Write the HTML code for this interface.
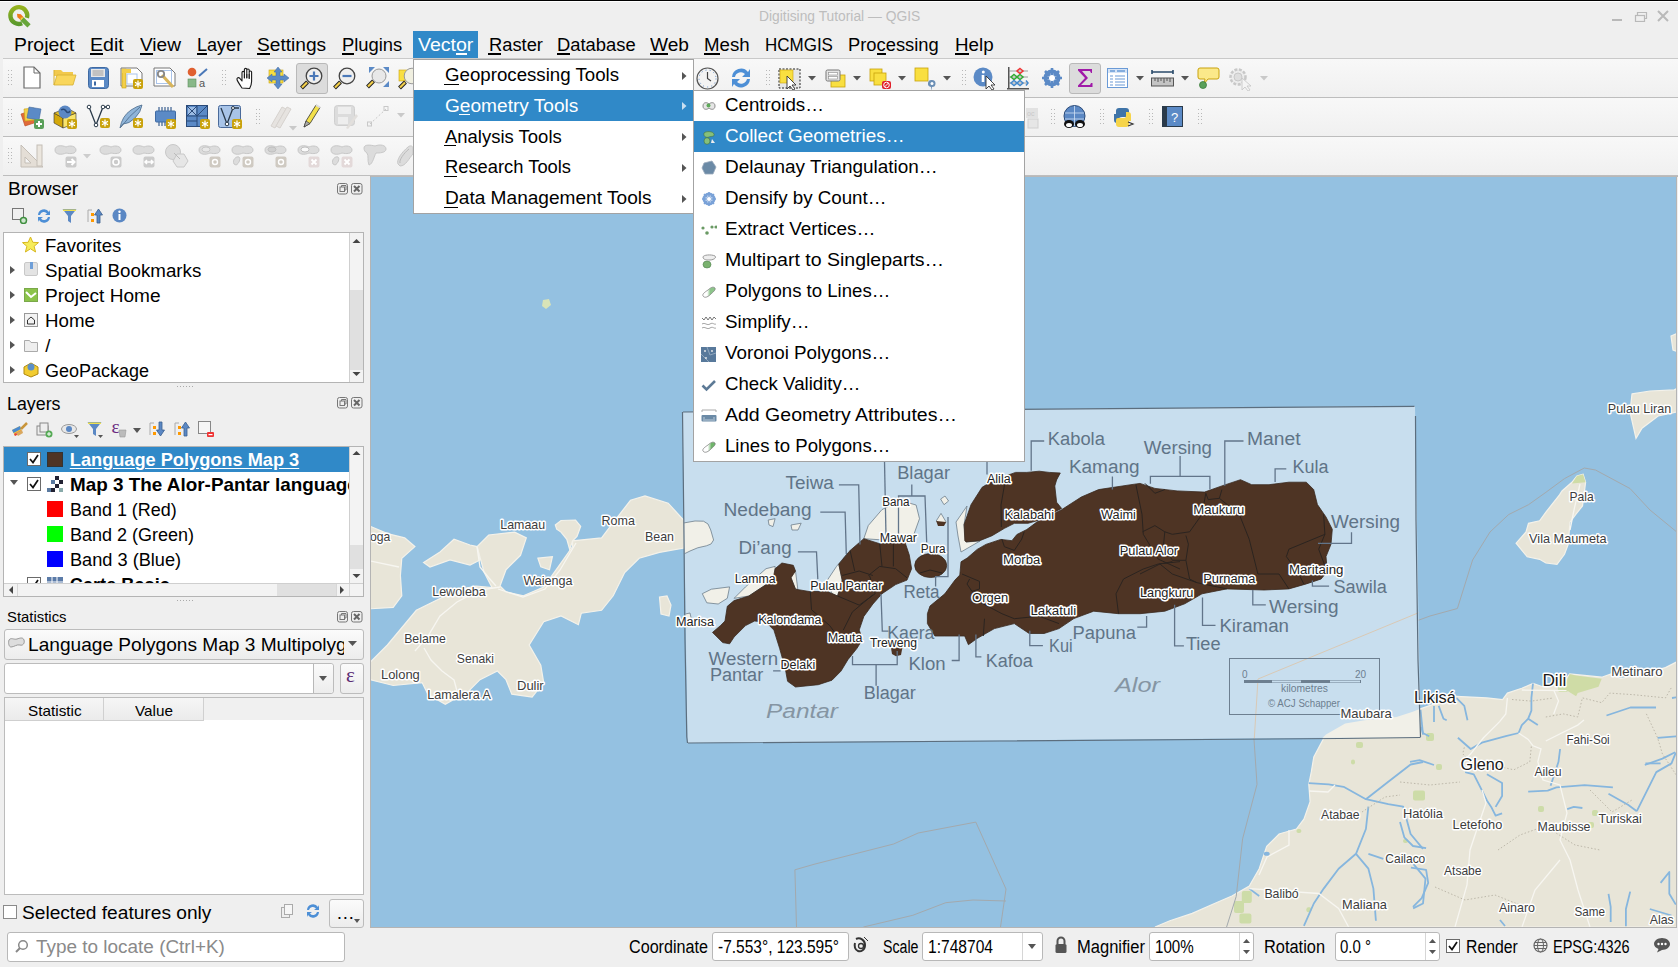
<!DOCTYPE html><html><head><meta charset="utf-8"><style>
html,body{margin:0;padding:0;}
body{width:1678px;height:967px;overflow:hidden;position:relative;background:#efefef;font-family:"Liberation Sans",sans-serif;}
.t{position:absolute;white-space:nowrap;}
.r{position:absolute;}
u{text-decoration:none;border-bottom:1px solid currentColor;}
</style></head><body>
<div class="r" style="left:370px;top:176px;width:1307px;height:752px;background:#b4b4b4;"></div>
<svg class="r" style="left:371px;top:177px;font-family:'Liberation Sans',sans-serif" width="1305" height="750" viewBox="371 177 1305 750"><rect x="371" y="177" width="1307" height="750" fill="#94c1e1"/><path d="M370.0 526.3 L387.4 533.6 L404.7 537.9 L414.9 546.6 L401.8 558.2 L400.4 575.5 L401.8 595.8 L393.2 607.4 L370.0 608.8 Z" fill="#e8e5d8" stroke="#f4f2ea" stroke-width="1.2"/><path d="M370.0 662.4 L387.4 645.0 L416.3 610.3 L439.5 598.7 L456.8 590.0 L476.0 586.0 L492.0 587.5 L484.0 572.0 L477.1 546.6 L488.7 535.0 L514.7 532.1 L526.3 537.9 L520.5 555.3 L506.0 569.7 L500.0 586.0 L506.0 592.0 L523.4 595.8 L543.7 587.1 L558.2 566.8 L572.6 546.6 L572.6 540.8 L601.6 537.9 L610.3 526.3 L630.5 500.3 L645.0 495.9 L668.2 503.2 L684.0 520.5 L684.0 548.0 L659.5 552.4 L639.2 558.2 L624.7 572.6 L613.2 595.8 L601.6 610.3 L581.3 613.2 L578.4 624.7 L561.0 616.0 L543.7 621.8 L529.2 645.0 L540.8 665.3 L543.7 682.6 L532.1 697.1 L511.8 694.2 L506.0 679.7 L497.4 671.0 L480.0 679.7 L468.4 691.3 L445.3 704.3 L427.9 694.2 L422.1 682.6 L393.2 685.5 L370.0 679.7 Z" fill="#e8e5d8" stroke="#f4f2ea" stroke-width="1.2"/><path d="M423.6 562.5 L440.0 552.0 L454.0 539.3 L470.0 545.0 L477.1 546.6 L480.0 560.0 L470.0 565.0 L450.0 560.0 L430.0 567.0 Z" fill="#e8e5d8" stroke="#f4f2ea" stroke-width="1.2"/><path d="M555.3 524.9 L561.0 520.5 L575.5 520.0 L580.7 526.3 L577.0 536.4 L572.6 540.8 L569.7 549.5 L566.8 539.3 L561.0 532.1 L556.7 529.2 Z" fill="#e8e5d8" stroke="#f4f2ea" stroke-width="1.2"/><path d="M537.9 558.2 L552.4 556.7 L549.5 569.7 L540.8 566.8 Z" fill="#e8e5d8" stroke="#f4f2ea" stroke-width="1.2"/><path d="M659.5 597.0 L667.0 596.0 L671.0 605.0 L669.0 616.0 L661.0 614.0 Z" fill="#e8e5d8" stroke="#f4f2ea" stroke-width="1.2"/><path d="M1632.0 393.9 L1650.0 391.0 L1674.3 389.9 L1678.0 388.0 L1678.0 412.0 L1676.4 412.0 L1658.2 416.0 L1642.0 428.2 L1636.0 438.3 L1630.0 412.0 Z" fill="#e8e5d8" stroke="#f4f2ea" stroke-width="1.2"/><path d="M1671.0 336.0 L1678.0 333.0 L1678.0 352.0 L1673.0 350.0 Z" fill="#e8e5d8" stroke="#f4f2ea" stroke-width="1.2"/><path d="M1583.1 474.3 L1585.6 482.3 L1584.3 492.3 L1582.5 505.9 L1575.6 514.6 L1570.0 522.1 L1569.4 529.5 L1568.2 544.4 L1564.5 554.3 L1557.0 564.3 L1545.9 563.0 L1539.6 559.3 L1527.2 556.8 L1516.1 543.2 L1526.0 532.0 L1528.5 523.3 L1539.6 520.8 L1545.9 512.1 L1559.5 494.8 L1562.0 491.0 L1571.9 482.3 L1576.9 476.1 Z" fill="#e8e5d8" stroke="#f4f2ea" stroke-width="1.2"/><path d="M1678.0 661.2 L1665.5 667.6 L1641.6 674.0 L1620.8 678.7 L1611.2 674.0 L1601.7 677.2 L1569.7 674.0 L1563.3 682.0 L1542.6 686.7 L1533.0 683.5 L1521.8 688.3 L1507.4 693.1 L1502.6 699.5 L1486.7 697.9 L1456.3 696.3 L1419.6 709.1 L1410.0 715.5 L1396.5 717.0 L1364.4 720.2 L1345.2 723.4 L1326.0 734.6 L1323.7 738.4 L1313.8 757.0 L1311.3 771.9 L1308.8 784.3 L1310.1 801.7 L1303.9 819.1 L1296.4 829.0 L1279.1 834.0 L1266.7 846.4 L1259.2 868.7 L1249.3 886.1 L1231.9 896.0 L1214.5 903.5 L1192.2 913.4 L1169.9 920.8 L1155.0 927.0 L1678.0 927.0 Z" fill="#e8e5d8" stroke="#f4f2ea" stroke-width="1.2"/><path d="M543.0 300.0 L549.0 299.0 L551.0 305.0 L546.0 309.0 L542.0 306.0 Z" fill="#d9e4b8"/><path d="M1576.9 476.1 L1583.1 474.3 L1585.6 482.3 L1572.0 483.5 Z" fill="#cfdca6"/><path d="M1563.3 688.3 L1569.7 674.0 L1576.1 675.6 L1601.7 678.7 L1598.5 686.7 L1577.7 693.1 L1576.1 696.3 Z" fill="#cfdca6"/><rect x="1356" y="742" width="7" height="6" rx="2" fill="#cddca8"/><rect x="1351" y="759.5" width="4" height="5" rx="2" fill="#cddca8"/><rect x="1413" y="790.5" width="12" height="10" rx="2" fill="#cddca8"/><rect x="1241.8" y="891" width="10" height="12" rx="2" fill="#cddca8"/><rect x="1234" y="901" width="10" height="12" rx="2" fill="#cddca8"/><rect x="1239.4" y="913.4" width="12" height="10" rx="2" fill="#cddca8"/><rect x="1296.4" y="829" width="5" height="4" rx="2" fill="#cddca8"/><rect x="1306.4" y="907.2" width="5" height="5" rx="2" fill="#cddca8"/><rect x="1558" y="684" width="10" height="8" rx="2" fill="#cddca8"/><rect x="1426" y="733" width="8" height="8" rx="2" fill="#cddca8"/><rect x="1436" y="764" width="6" height="6" rx="2" fill="#cddca8"/><rect x="1538" y="806" width="6" height="6" rx="2" fill="#cddca8"/><rect x="1592" y="810" width="6" height="6" rx="2" fill="#cddca8"/><rect x="1588" y="822" width="6" height="6" rx="2" fill="#cddca8"/><rect x="1403" y="839" width="5" height="4" rx="2" fill="#cddca8"/><path d="M1308.8 783.1 L1328.7 784.3 L1343.6 786.8 L1365.9 799.2 L1388.3 804.2 L1403.2 806.7 L1410.6 834.0 L1423.0 848.8" fill="none" stroke="#86b6de" stroke-width="1.8" stroke-linejoin="round"/><path d="M1365.9 799.2 L1388.3 781.8 L1410.6 764.5 L1423.0 762.0" fill="none" stroke="#86b6de" stroke-width="1.8" stroke-linejoin="round"/><path d="M1368.4 806.7 L1365.9 829.0 L1356.0 853.8 L1338.6 868.7 L1323.7 888.6 L1313.8 903.5 L1303.9 925.8" fill="none" stroke="#86b6de" stroke-width="1.8" stroke-linejoin="round"/><path d="M1356.0 853.8 L1368.4 868.7 L1373.4 888.6 L1375.9 920.8" fill="none" stroke="#86b6de" stroke-width="1.8" stroke-linejoin="round"/><path d="M1368.4 853.8 L1383.3 858.8" fill="none" stroke="#86b6de" stroke-width="1.8" stroke-linejoin="round"/><path d="M1413.1 863.7 L1425.5 878.6 L1423.0 903.5 L1413.1 908.4" fill="none" stroke="#86b6de" stroke-width="1.8" stroke-linejoin="round"/><path d="M1249.3 888.6 L1259.2 896.0" fill="none" stroke="#86b6de" stroke-width="1.8" stroke-linejoin="round"/><path d="M1420.5 709.9 L1423.0 734.7" fill="none" stroke="#86b6de" stroke-width="1.8" stroke-linejoin="round"/><path d="M1456.3 697.9 L1464.3 705.9 L1467.5 720.3" fill="none" stroke="#86b6de" stroke-width="1.8" stroke-linejoin="round"/><path d="M1434.0 705.9 L1434.0 721.9" fill="none" stroke="#86b6de" stroke-width="1.8" stroke-linejoin="round"/><path d="M1438.7 705.9 L1443.5 718.7 L1446.7 720.3" fill="none" stroke="#86b6de" stroke-width="1.8" stroke-linejoin="round"/><path d="M1421.2 726.7 L1422.8 733.0 L1429.2 736.2" fill="none" stroke="#86b6de" stroke-width="1.8" stroke-linejoin="round"/><path d="M1533.0 683.5 L1531.4 697.9 L1531.4 710.7 L1528.2 718.7 L1521.8 725.1 L1518.6 733.0 L1505.8 736.2 L1481.9 742.6 L1470.7 749.0 L1457.9 737.8" fill="none" stroke="#86b6de" stroke-width="1.8" stroke-linejoin="round"/><path d="M1528.2 718.7 L1537.8 725.1" fill="none" stroke="#86b6de" stroke-width="1.8" stroke-linejoin="round"/><path d="M1606.5 715.5 L1630.4 707.5 L1656.0 707.5" fill="none" stroke="#86b6de" stroke-width="1.8" stroke-linejoin="round"/><path d="M1672.0 698.0 L1678.0 697.0" fill="none" stroke="#86b6de" stroke-width="1.8" stroke-linejoin="round"/><path d="M1644.8 765.0 L1662.4 758.6 L1675.1 752.2" fill="none" stroke="#86b6de" stroke-width="1.8" stroke-linejoin="round"/><path d="M1657.6 737.8 L1678.0 736.2" fill="none" stroke="#86b6de" stroke-width="1.8" stroke-linejoin="round"/><path d="M1560.1 749.0 L1558.5 761.8 L1550.6 785.8" fill="none" stroke="#86b6de" stroke-width="1.8" stroke-linejoin="round"/><path d="M1465.2 772.1 L1473.8 774.3 L1480.4 787.3 L1486.9 800.4 L1491.2 806.9 L1495.6 815.6 L1502.1 813.4" fill="none" stroke="#86b6de" stroke-width="1.8" stroke-linejoin="round"/><path d="M1486.9 774.3 L1502.1 783.0 L1502.1 796.0 L1495.6 806.9" fill="none" stroke="#86b6de" stroke-width="1.8" stroke-linejoin="round"/><path d="M1410.0 761.8 L1419.6 760.2 L1434.0 765.0" fill="none" stroke="#86b6de" stroke-width="1.8" stroke-linejoin="round"/><path d="M1528.2 791.7 L1547.7 790.6 L1556.4 787.3 L1584.6 785.2 L1612.9 787.3" fill="none" stroke="#86b6de" stroke-width="1.8" stroke-linejoin="round"/><path d="M1608.5 793.8 L1628.0 804.7 L1636.8 811.2" fill="none" stroke="#86b6de" stroke-width="1.8" stroke-linejoin="round"/><path d="M1636.8 811.2 L1649.8 785.2 L1656.3 772.1 L1671.5 763.4 L1675.8 752.6" fill="none" stroke="#86b6de" stroke-width="1.8" stroke-linejoin="round"/><path d="M1645.4 763.4 L1660.6 763.4" fill="none" stroke="#86b6de" stroke-width="1.8" stroke-linejoin="round"/><path d="M1567.2 809.1 L1573.8 806.9 L1582.4 808.0" fill="none" stroke="#86b6de" stroke-width="1.8" stroke-linejoin="round"/><path d="M1400.0 822.1 L1404.3 837.3 L1413.0 846.0 L1426.1 848.2" fill="none" stroke="#86b6de" stroke-width="1.8" stroke-linejoin="round"/><path d="M1410.9 867.7 L1426.1 869.9 L1428.2 882.9 L1421.7 898.1 L1413.0 906.8" fill="none" stroke="#86b6de" stroke-width="1.8" stroke-linejoin="round"/><path d="M1660.6 882.9 L1669.3 872.0 L1669.3 893.8 L1675.8 904.6" fill="none" stroke="#86b6de" stroke-width="1.8" stroke-linejoin="round"/><path d="M1608.5 893.8 L1610.7 906.8 L1610.7 922.0" fill="none" stroke="#86b6de" stroke-width="1.8" stroke-linejoin="round"/><path d="M1630.2 891.6 L1625.9 909.0 L1625.9 926.3" fill="none" stroke="#86b6de" stroke-width="1.8" stroke-linejoin="round"/><path d="M1649.8 909.0 L1671.5 915.5" fill="none" stroke="#86b6de" stroke-width="1.8" stroke-linejoin="round"/><path d="M1500.0 920.0 L1505.0 926.0" fill="none" stroke="#86b6de" stroke-width="1.8" stroke-linejoin="round"/><path d="M1521.8 690.0 L1566.5 690.7" fill="none" stroke="#f7f6f1" stroke-width="1.3"/><path d="M1499.4 721.9 L1483.5 737.8 L1470.7 753.8 L1462.7 761.8" fill="none" stroke="#f7f6f1" stroke-width="1.3"/><path d="M1507.4 697.9 L1505.8 713.9 L1499.4 721.9" fill="none" stroke="#f7f6f1" stroke-width="1.3"/><path d="M1553.7 690.0 L1558.5 701.1 L1553.7 713.9" fill="none" stroke="#f7f6f1" stroke-width="1.3"/><path d="M1518.6 733.0 L1528.2 739.4 L1533.0 745.8 L1541.0 749.0 L1537.8 761.8 L1543.0 780.0 L1560.0 785.0 L1567.0 813.0 L1560.0 840.0 L1570.0 860.0 L1578.0 890.0 L1590.0 927.0" fill="none" stroke="#f7f6f1" stroke-width="1.3"/><path d="M1545.8 741.0 L1561.7 733.0 L1577.7 725.1 L1584.0 720.0" fill="none" stroke="#f7f6f1" stroke-width="1.3"/><path d="M1482.0 790.0 L1486.0 803.0 L1476.0 832.0 L1470.0 850.0 L1467.0 885.0 L1455.0 927.0" fill="none" stroke="#f7f6f1" stroke-width="1.3"/><path d="M1560.0 860.0 L1535.0 890.0 L1522.0 927.0" fill="none" stroke="#f7f6f1" stroke-width="1.3"/><path d="M1309.0 791.0 L1328.0 792.0 L1335.0 785.0" fill="none" stroke="#f7f6f1" stroke-width="1.3"/><path d="M1289.0 830.0 L1289.0 845.0 L1267.0 857.0 L1259.0 875.0" fill="none" stroke="#f7f6f1" stroke-width="1.3"/><path d="M1249.3 888.6 L1318.8 893.5 L1338.6 908.4 L1348.6 927.0" fill="none" stroke="#f7f6f1" stroke-width="1.3"/><path d="M370.0 561.0 L399.0 567.0" fill="none" stroke="#f7f6f1" stroke-width="1.3"/><path d="M415.0 651.0 L428.0 636.0 L440.0 616.0 L457.0 602.0 L480.0 590.0 L500.0 587.0" fill="none" stroke="#f7f6f1" stroke-width="1.3"/><path d="M424.0 648.0 L431.0 660.0 L442.0 671.0 L454.0 680.0 L457.0 691.0" fill="none" stroke="#f7f6f1" stroke-width="1.3"/><path d="M477.0 547.0 L480.0 567.0 L489.0 578.0 L496.0 586.0" fill="none" stroke="#f7f6f1" stroke-width="1.3"/><path d="M498.0 589.0 L523.0 597.0 L545.0 589.0 L560.0 570.0 L576.0 543.0" fill="none" stroke="#f7f6f1" stroke-width="1.3"/><path d="M1580.0 484.0 L1574.0 510.0 L1570.0 530.0" fill="none" stroke="#f7f6f1" stroke-width="1.3"/><path d="M1512.0 699.5 L1531.4 701.1 L1553.7 697.9" fill="none" stroke="#bdb8aa" stroke-width="1" stroke-dasharray="1.5 2"/><path d="M1545.8 717.0 L1563.3 713.9 L1577.7 717.0 L1582.4 697.9 L1601.7 702.7 L1609.7 693.1 L1633.6 694.7 L1665.5 697.9 L1671.9 686.7" fill="none" stroke="#bdb8aa" stroke-width="1" stroke-dasharray="1.5 2"/><path d="M1464.3 747.4 L1462.7 753.8 L1473.9 765.0 L1499.4 766.6 L1513.8 769.8 L1529.8 761.8 L1531.4 745.8" fill="none" stroke="#bdb8aa" stroke-width="1" stroke-dasharray="1.5 2"/><path d="M1646.4 713.9 L1657.6 737.8 L1662.4 753.8 L1678.0 777.8" fill="none" stroke="#bdb8aa" stroke-width="1" stroke-dasharray="1.5 2"/><path d="M1400.0 782.0 L1430.0 785.0 L1460.0 782.0" fill="none" stroke="#bdb8aa" stroke-width="1" stroke-dasharray="1.5 2"/><path d="M1498.0 850.0 L1520.0 835.0 L1545.0 826.0 L1575.0 845.0 L1600.0 850.0" fill="none" stroke="#bdb8aa" stroke-width="1" stroke-dasharray="1.5 2"/><path d="M1435.0 887.0 L1465.0 900.0 L1495.0 895.0 L1520.0 905.0" fill="none" stroke="#bdb8aa" stroke-width="1" stroke-dasharray="1.5 2"/><path d="M1590.0 790.0 L1612.0 812.0 L1632.0 800.0" fill="none" stroke="#bdb8aa" stroke-width="1" stroke-dasharray="1.5 2"/><path d="M1362.0 812.0 L1385.0 797.0 L1400.0 795.0" fill="none" stroke="#bdb8aa" stroke-width="1" stroke-dasharray="1.5 2"/><ellipse cx="1266.7" cy="853.8" rx="3" ry="2" fill="#86b6de"/><path d="M1678.0 533.0 L1650.0 510.0 L1630.0 488.5 L1595.5 470.0 L1584.3 468.0 L1564.5 478.6 L1545.9 492.3 L1528.5 504.7 L1508.6 514.6 L1490.0 532.0 L1472.6 560.0 L1457.4 608.5 L1430.0 616.0 L1258.0 679.0 L1253.8 736.2 L1257.0 784.3 L1242.6 838.8 L1236.2 896.5 L1226.6 927.0" fill="none" stroke="#a3a9ad" stroke-width="1"/><path d="M796.5 927.0 L794.9 869.8 L814.0 864.3 L893.6 844.0 L918.2 833.0 L975.8 822.1 L1006.0 889.0 L1000.5 927.0" fill="none" stroke="#a3a9ad" stroke-width="1"/><path d="M863.4 927.0 L912.8 915.3 L945.7 902.7 L973.0 900.0 L1006.0 901.0" fill="none" stroke="#a3a9ad" stroke-width="1"/><defs><clipPath id="ovc"><path d="M682.5 412.0 L1415.0 406.0 L1420.5 737.0 L687.5 743.0 Z"/></clipPath></defs><path d="M682.5 412.0 L1415.0 406.0 L1420.5 737.0 L687.5 743.0 Z" fill="#c8deee"/><g clip-path="url(#ovc)"><path d="M1412.0 712.0 L1396.5 717.0 L1364.4 720.2 L1345.2 723.4 L1326.0 734.6 L1316.0 744.0 L1430.0 744.0 L1430.0 705.0 Z" fill="#f1f0e8"/><path d="M683.5 523.0 L695.0 521.0 L703.5 521.2 L708.0 524.0 L710.7 529.9 L713.6 540.0 L711.0 544.0 L706.4 545.8 L697.7 547.8 L690.0 551.0 L686.0 553.0 L683.5 554.0 Z" fill="#f1f0e8" stroke="#6f7f8c" stroke-width=".8"/><path d="M702.3 593.7 L711.4 589.2 L729.6 586.9 L727.3 598.3 L718.2 604.0 L706.8 602.8 Z" fill="#f1f0e8" stroke="#6f7f8c" stroke-width=".8"/><path d="M768.2 520.0 L775.1 518.7 L773.0 526.6 L769.0 525.0 Z" fill="#f1f0e8" stroke="#6f7f8c" stroke-width=".8"/><path d="M791.0 525.0 L801.2 523.2 L798.0 530.0 L792.0 530.0 Z" fill="#f1f0e8" stroke="#6f7f8c" stroke-width=".8"/><path d="M734.1 598.3 L745.5 586.9 L766.0 568.7 L775.1 566.4 L775.1 580.1 L759.1 589.2 L748.9 596.0 Z" fill="#f1f0e8" stroke="#6f7f8c" stroke-width=".8"/><path d="M791.0 577.8 L792.1 569.9 L795.5 571.0 L797.8 589.2 L795.5 589.2 Z" fill="#f1f0e8" stroke="#6f7f8c" stroke-width=".8"/><path d="M827.4 580.1 L836.5 566.4 L847.9 552.8 L838.8 564.2 L842.2 580.1 L837.6 596.0 L832.0 593.7 Z" fill="#f1f0e8" stroke="#6f7f8c" stroke-width=".8"/><path d="M863.8 538.7 L868.3 525.5 L882.0 509.6 L900.2 500.5 L916.1 505.0 L919.5 518.7 L913.8 534.6 L904.7 541.4 Z" fill="#f1f0e8" stroke="#6f7f8c" stroke-width=".8"/><path d="M956.0 522.0 L967.0 506.0 L964.0 525.0 L966.0 542.0 L980.0 541.0 L961.0 552.0 L958.0 536.0 Z" fill="#f1f0e8" stroke="#6f7f8c" stroke-width=".8"/><path d="M940.6 499.0 L945.0 496.0 L948.6 501.0 L944.0 504.7 Z" fill="#f1f0e8" stroke="#6f7f8c" stroke-width=".8"/><path d="M936.2 521.0 L941.0 513.4 L946.1 522.0 L943.0 525.8 Z" fill="#f1f0e8" stroke="#6f7f8c" stroke-width=".8"/><path d="M676.0 616.0 L690.0 613.0 L692.0 622.0 L678.0 625.0 Z" fill="#f1f0e8" stroke="#6f7f8c" stroke-width=".8"/><path d="M863.8 538.7 L879.7 543.7 L904.7 541.4 L909.3 555.1 L911.6 568.7 L907.0 580.1 L895.6 584.6 L882.0 593.7 L872.9 604.0 L863.8 616.5 L859.2 630.1 L862.6 639.2 L857.0 648.3 L847.9 659.7 L841.0 671.1 L832.0 680.2 L818.3 684.7 L795.5 687.0 L787.6 681.3 L785.3 668.8 L779.6 648.3 L773.9 630.1 L766.0 622.2 L754.6 621.0 L745.5 625.6 L734.1 637.0 L729.6 643.8 L722.7 642.6 L712.5 632.4 L720.5 625.6 L725.0 621.0 L727.3 606.3 L734.1 600.6 L748.9 596.0 L759.1 589.2 L772.8 580.1 L775.1 568.7 L781.9 563.0 L793.3 565.3 L795.5 571.0 L791.0 577.8 L795.5 589.2 L809.2 591.5 L827.4 591.5 L837.6 596.0 L842.2 580.1 L838.8 564.2 L850.1 550.5 Z" fill="#4e3424" stroke="#3a2a20" stroke-width=".8" stroke-linejoin="round"/><path d="M964.8 540.7 L964.1 524.5 L971.0 504.7 L982.1 487.3 L988.3 483.6 L1000.0 478.0 L1015.6 472.4 L1026.8 472.4 L1039.2 471.2 L1049.2 472.4 L1060.3 473.0 L1056.6 479.9 L1054.8 486.0 L1056.6 502.2 L1061.6 508.4 L1036.8 520.8 L1028.0 523.3 L1014.4 523.3 L1004.5 528.3 L992.1 535.7 L979.7 540.7 L966.0 541.9 Z" fill="#4e3424" stroke="#3a2a20" stroke-width=".8" stroke-linejoin="round"/><path d="M927.4 613.7 L930.0 606.0 L944.8 593.8 L955.0 580.0 L959.8 575.0 L961.0 561.8 L967.2 558.0 L977.2 549.4 L985.9 544.4 L1000.8 539.4 L1011.9 540.7 L1016.9 534.5 L1026.8 529.5 L1036.8 522.1 L1061.6 509.7 L1081.3 497.0 L1098.6 489.6 L1130.9 484.7 L1140.0 483.4 L1154.9 488.4 L1177.2 490.9 L1204.5 492.1 L1221.9 485.9 L1240.5 479.7 L1251.7 484.7 L1269.0 484.7 L1288.9 482.2 L1306.3 482.2 L1313.7 489.6 L1317.4 504.5 L1326.0 517.0 L1332.3 529.3 L1331.0 544.2 L1326.0 556.6 L1327.3 571.5 L1321.1 579.0 L1306.3 583.9 L1288.9 588.9 L1264.0 590.0 L1226.8 588.9 L1202.0 593.8 L1184.7 603.8 L1164.8 611.2 L1140.0 613.7 L1118.5 613.7 L1093.7 611.2 L1073.8 618.6 L1059.0 628.6 L1044.0 633.5 L1029.2 633.5 L1014.3 623.6 L994.4 628.6 L977.0 638.5 L968.4 644.7 L964.7 636.0 L944.8 636.0 L934.9 636.0 L927.4 623.6 Z" fill="#4e3424" stroke="#3a2a20" stroke-width=".8" stroke-linejoin="round"/><path d="M936.2 521.0 L946.1 522.0 L944.0 526.0 L938.0 526.0 Z" fill="#4e3424"/><path d="M891.0 648.0 L902.5 647.2 L901.0 655.0 L896.0 656.3 L892.0 654.0 Z" fill="#4e3424"/><ellipse cx="930.7" cy="565.5" rx="16" ry="12" fill="#4e3424" stroke="#3a2a20" stroke-width=".8"/><path d="M879.7 543.7 L882.0 566.4" fill="none" stroke="#2b2420" stroke-width="1"/><path d="M893.4 543.7 L893.4 566.4" fill="none" stroke="#2b2420" stroke-width="1"/><path d="M850.1 550.5 L854.7 571.0" fill="none" stroke="#2b2420" stroke-width="1"/><path d="M842.2 575.5 L859.2 571.0 L872.9 575.5" fill="none" stroke="#2b2420" stroke-width="1"/><path d="M868.3 575.5 L879.7 566.4 L895.6 568.7 L907.0 577.8" fill="none" stroke="#2b2420" stroke-width="1"/><path d="M869.5 575.5 L875.2 593.7 L859.2 605.1 L837.6 596.0" fill="none" stroke="#2b2420" stroke-width="1"/><path d="M810.3 591.5 L811.5 609.7 L829.7 625.6 L836.5 634.7" fill="none" stroke="#2b2420" stroke-width="1"/><path d="M872.9 594.9 L852.4 611.9 L843.3 630.1" fill="none" stroke="#2b2420" stroke-width="1"/><path d="M920.0 573.0 L930.0 570.0 L942.0 573.0" fill="none" stroke="#2b2420" stroke-width="1"/><path d="M1004.5 484.8 L1001.0 505.0 L1001.4 527.0" fill="none" stroke="#2b2420" stroke-width="1"/><path d="M962.0 574.0 L979.5 581.4 L979.5 589.0 L972.0 591.4 L967.0 584.0 L969.6 579.0" fill="none" stroke="#2b2420" stroke-width="1"/><path d="M980.8 602.5 L1001.9 613.7 L1014.3 618.7 L1039.1 616.2 L1059.0 623.6" fill="none" stroke="#2b2420" stroke-width="1"/><path d="M984.5 618.7 L983.3 636.0" fill="none" stroke="#2b2420" stroke-width="1"/><path d="M1118.5 613.7 L1116.0 593.8 L1123.5 579.0 L1143.3 569.0 L1158.2 564.0 L1180.0 561.6" fill="none" stroke="#2b2420" stroke-width="1"/><path d="M1135.9 484.7 L1142.0 514.4 L1143.3 534.3 L1158.2 559.1 L1180.0 569.0" fill="none" stroke="#2b2420" stroke-width="1"/><path d="M1001.9 539.2 L1004.4 546.7 L1014.3 550.4 L1021.7 539.2 L1024.2 531.8" fill="none" stroke="#2b2420" stroke-width="1"/><path d="M1145.0 483.4 L1154.9 493.3 L1164.8 489.6" fill="none" stroke="#2b2420" stroke-width="1"/><path d="M1205.8 493.3 L1208.2 499.6 L1219.4 498.3 L1221.9 489.6" fill="none" stroke="#2b2420" stroke-width="1"/><path d="M1205.8 493.3 L1202.0 514.4 L1189.6 531.8 L1172.3 534.3 L1164.8 531.8 L1154.9 525.6 L1142.5 531.8" fill="none" stroke="#2b2420" stroke-width="1"/><path d="M1164.8 531.8 L1163.6 544.2 L1172.3 560.3 L1185.9 560.3 L1188.4 544.2 L1185.9 535.5" fill="none" stroke="#2b2420" stroke-width="1"/><path d="M1185.9 560.3 L1189.6 579.0 L1197.0 582.7" fill="none" stroke="#2b2420" stroke-width="1"/><path d="M1140.0 574.0 L1159.9 564.0 L1172.3 561.6" fill="none" stroke="#2b2420" stroke-width="1"/><path d="M1159.9 564.0 L1172.3 574.0 L1197.0 582.7 L1226.8 588.9" fill="none" stroke="#2b2420" stroke-width="1"/><path d="M1219.4 498.3 L1239.3 514.4 L1249.2 539.2 L1257.9 574.0 L1279.0 574.0 L1288.9 588.9" fill="none" stroke="#2b2420" stroke-width="1"/><path d="M1323.6 514.4 L1324.9 534.3 L1288.9 549.2 L1286.4 556.6 L1298.8 574.0 L1303.8 583.9" fill="none" stroke="#2b2420" stroke-width="1"/><path d="M1324.9 534.3 L1318.7 549.2 L1326.1 569.0" fill="none" stroke="#2b2420" stroke-width="1"/><path d="M838.9 484.8 L858.7 484.8 L860.0 544.4" fill="none" stroke="#62758a" stroke-width="1.3"/><path d="M820.3 512.1 L845.1 512.1 L846.3 554.3" fill="none" stroke="#62758a" stroke-width="1.3"/><path d="M797.9 551.8 L816.5 551.8 L817.8 579.1" fill="none" stroke="#62758a" stroke-width="1.3"/><path d="M884.5 461.0 L886.0 536.0" fill="none" stroke="#62758a" stroke-width="1.3"/><path d="M911.8 484.4 L911.8 496.0" fill="none" stroke="#62758a" stroke-width="1.3"/><path d="M898.5 534.0 L898.5 496.0 L925.0 496.0 L926.7 542.4" fill="none" stroke="#62758a" stroke-width="1.3"/><path d="M948.0 517.0 L948.0 576.6 L935.6 576.6 L935.6 586.5" fill="none" stroke="#62758a" stroke-width="1.3"/><path d="M881.0 594.0 L882.3 631.2 L888.5 631.2" fill="none" stroke="#62758a" stroke-width="1.3"/><path d="M852.5 656.0 L852.5 664.7 L897.2 664.7 L897.2 651.0" fill="none" stroke="#62758a" stroke-width="1.3"/><path d="M876.1 664.7 L876.1 685.8" fill="none" stroke="#62758a" stroke-width="1.3"/><path d="M773.1 670.9 L780.6 670.9" fill="none" stroke="#62758a" stroke-width="1.3"/><path d="M951.7 660.5 L959.1 660.5 L959.1 634.5" fill="none" stroke="#62758a" stroke-width="1.3"/><path d="M975.9 634.5 L975.9 656.8 L981.4 656.8" fill="none" stroke="#62758a" stroke-width="1.3"/><path d="M1029.8 630.7 L1029.8 645.6 L1042.9 645.6" fill="none" stroke="#62758a" stroke-width="1.3"/><path d="M1031.2 470.8 L1031.2 441.0 L1044.2 441.0" fill="none" stroke="#62758a" stroke-width="1.3"/><path d="M987.0 461.4 L987.0 474.4" fill="none" stroke="#62758a" stroke-width="1.3"/><path d="M1112.4 476.4 L1112.4 489.4" fill="none" stroke="#62758a" stroke-width="1.3"/><path d="M1150.4 483.8 L1150.4 476.4 L1209.9 476.4 L1209.9 489.4" fill="none" stroke="#62758a" stroke-width="1.3"/><path d="M1180.1 455.9 L1180.1 476.4" fill="none" stroke="#62758a" stroke-width="1.3"/><path d="M1243.5 441.0 L1224.8 441.0 L1224.8 485.7" fill="none" stroke="#62758a" stroke-width="1.3"/><path d="M1286.3 468.9 L1275.1 468.9 L1275.1 482.0" fill="none" stroke="#62758a" stroke-width="1.3"/><path d="M1351.5 532.2 L1351.5 543.4 L1318.0 543.4" fill="none" stroke="#62758a" stroke-width="1.3"/><path d="M1312.4 580.6 L1312.4 586.2 L1329.1 586.2" fill="none" stroke="#62758a" stroke-width="1.3"/><path d="M1252.8 590.0 L1252.8 604.8 L1265.8 604.8" fill="none" stroke="#62758a" stroke-width="1.3"/><path d="M1202.5 597.4 L1202.5 625.3 L1215.5 625.3" fill="none" stroke="#62758a" stroke-width="1.3"/><path d="M1174.6 604.8 L1174.6 645.8 L1183.9 645.8" fill="none" stroke="#62758a" stroke-width="1.3"/><path d="M1146.6 616.0 L1146.6 627.2 L1137.3 627.2" fill="none" stroke="#62758a" stroke-width="1.3"/><path d="M1430.0 608.0 L1258.0 679.0 L1254.0 743.0" fill="none" stroke="#d9c9b5" stroke-width="1"/><rect x="1229.5" y="658.5" width="150" height="56" fill="none" stroke="#6d7f90" stroke-width="1"/><rect x="1244" y="680" width="117" height="3" fill="#6d7f90"/><rect x="1272" y="680.5" width="29" height="2" fill="#c8deee"/><rect x="1330" y="680.5" width="30" height="2" fill="#c8deee"/><text x="1242.0" y="678.0" font-size="10" fill="#6d7f90" font-weight="normal" text-anchor="start">0</text><text x="1355.0" y="678.0" font-size="10" fill="#6d7f90" font-weight="normal" text-anchor="start">20</text><text x="1281.0" y="692.4" font-size="10" fill="#6d7f90" font-weight="normal" textLength="47.0" lengthAdjust="spacingAndGlyphs" text-anchor="start">kilometres</text><text x="1268.0" y="706.9" font-size="10" fill="#6d7f90" font-weight="normal" textLength="72.0" lengthAdjust="spacingAndGlyphs" text-anchor="start">© ACJ Schapper</text><text x="785.5" y="488.5" font-size="18" fill="#607487" font-weight="normal" textLength="48.4" lengthAdjust="spacingAndGlyphs" text-anchor="start">Teiwa</text><text x="723.5" y="515.8" font-size="18" fill="#607487" font-weight="normal" textLength="88.1" lengthAdjust="spacingAndGlyphs" text-anchor="start">Nedebang</text><text x="738.4" y="554.2" font-size="18" fill="#607487" font-weight="normal" textLength="53.3" lengthAdjust="spacingAndGlyphs" text-anchor="start">Di’ang</text><text x="897.2" y="478.6" font-size="18" fill="#607487" font-weight="normal" textLength="52.8" lengthAdjust="spacingAndGlyphs" text-anchor="start">Blagar</text><text x="708.6" y="664.7" font-size="18" fill="#607487" font-weight="normal" textLength="69.5" lengthAdjust="spacingAndGlyphs" text-anchor="start">Western</text><text x="709.9" y="680.8" font-size="18" fill="#607487" font-weight="normal" textLength="53.3" lengthAdjust="spacingAndGlyphs" text-anchor="start">Pantar</text><text x="903.4" y="597.9" font-size="18" fill="#607487" font-weight="normal" textLength="36.0" lengthAdjust="spacingAndGlyphs" text-anchor="start">Reta</text><text x="887.3" y="639.2" font-size="18" fill="#607487" font-weight="normal" textLength="47.1" lengthAdjust="spacingAndGlyphs" text-anchor="start">Kaera</text><text x="908.4" y="670.2" font-size="18" fill="#607487" font-weight="normal" textLength="37.2" lengthAdjust="spacingAndGlyphs" text-anchor="start">Klon</text><text x="863.7" y="699.2" font-size="18" fill="#607487" font-weight="normal" textLength="52.1" lengthAdjust="spacingAndGlyphs" text-anchor="start">Blagar</text><text x="1047.8" y="445.2" font-size="18" fill="#607487" font-weight="normal" textLength="57.1" lengthAdjust="spacingAndGlyphs" text-anchor="start">Kabola</text><text x="1068.9" y="472.5" font-size="18" fill="#607487" font-weight="normal" textLength="70.7" lengthAdjust="spacingAndGlyphs" text-anchor="start">Kamang</text><text x="1072.6" y="638.5" font-size="18" fill="#607487" font-weight="normal" textLength="63.3" lengthAdjust="spacingAndGlyphs" text-anchor="start">Papuna</text><text x="1049.0" y="652.0" font-size="18" fill="#607487" font-weight="normal" textLength="23.6" lengthAdjust="spacingAndGlyphs" text-anchor="start">Kui</text><text x="985.8" y="667.2" font-size="18" fill="#607487" font-weight="normal" textLength="47.1" lengthAdjust="spacingAndGlyphs" text-anchor="start">Kafoa</text><text x="1143.7" y="454.2" font-size="18" fill="#607487" font-weight="normal" textLength="68.3" lengthAdjust="spacingAndGlyphs" text-anchor="start">Wersing</text><text x="1247.0" y="445.2" font-size="18" fill="#607487" font-weight="normal" textLength="53.5" lengthAdjust="spacingAndGlyphs" text-anchor="start">Manet</text><text x="1292.6" y="473.4" font-size="18" fill="#607487" font-weight="normal" textLength="36.0" lengthAdjust="spacingAndGlyphs" text-anchor="start">Kula</text><text x="1331.0" y="527.8" font-size="18" fill="#607487" font-weight="normal" textLength="69.0" lengthAdjust="spacingAndGlyphs" text-anchor="start">Wersing</text><text x="1333.5" y="593.4" font-size="18" fill="#607487" font-weight="normal" textLength="53.4" lengthAdjust="spacingAndGlyphs" text-anchor="start">Sawila</text><text x="1269.0" y="612.5" font-size="18" fill="#607487" font-weight="normal" textLength="69.5" lengthAdjust="spacingAndGlyphs" text-anchor="start">Wersing</text><text x="1219.4" y="631.8" font-size="18" fill="#607487" font-weight="normal" textLength="69.5" lengthAdjust="spacingAndGlyphs" text-anchor="start">Kiraman</text><text x="1185.9" y="649.8" font-size="18" fill="#607487" font-weight="normal" textLength="34.7" lengthAdjust="spacingAndGlyphs" text-anchor="start">Tiee</text><text x="1115.0" y="691.9" font-size="20" fill="#8595a3" font-weight="normal" font-style="italic" textLength="45.0" lengthAdjust="spacingAndGlyphs" text-anchor="start">Alor</text><text x="766.0" y="717.9" font-size="20" fill="#8595a3" font-weight="normal" font-style="italic" textLength="72.0" lengthAdjust="spacingAndGlyphs" text-anchor="start">Pantar</text><text x="882.3" y="506.3" font-size="12.5" fill="#222" font-weight="normal" textLength="27.3" lengthAdjust="spacingAndGlyphs" stroke="#fff" stroke-width="3" stroke-linejoin="round" paint-order="stroke" text-anchor="start">Bana</text><text x="879.8" y="542.3" font-size="12.5" fill="#222" font-weight="normal" textLength="37.2" lengthAdjust="spacingAndGlyphs" stroke="#fff" stroke-width="3" stroke-linejoin="round" paint-order="stroke" text-anchor="start">Mawar</text><text x="920.8" y="553.1" font-size="12.5" fill="#222" font-weight="normal" textLength="24.8" lengthAdjust="spacingAndGlyphs" stroke="#fff" stroke-width="3" stroke-linejoin="round" paint-order="stroke" text-anchor="start">Pura</text><text x="734.7" y="582.7" font-size="12.5" fill="#222" font-weight="normal" textLength="40.9" lengthAdjust="spacingAndGlyphs" stroke="#fff" stroke-width="3" stroke-linejoin="round" paint-order="stroke" text-anchor="start">Lamma</text><text x="810.3" y="590.3" font-size="12.5" fill="#222" font-weight="normal" textLength="72.0" lengthAdjust="spacingAndGlyphs" stroke="#fff" stroke-width="3" stroke-linejoin="round" paint-order="stroke" text-anchor="start">Pulau Pantar</text><text x="758.2" y="624.3" font-size="12.5" fill="#222" font-weight="normal" textLength="63.3" lengthAdjust="spacingAndGlyphs" stroke="#fff" stroke-width="3" stroke-linejoin="round" paint-order="stroke" text-anchor="start">Kalondama</text><text x="827.7" y="641.7" font-size="12.5" fill="#222" font-weight="normal" textLength="34.8" lengthAdjust="spacingAndGlyphs" stroke="#fff" stroke-width="3" stroke-linejoin="round" paint-order="stroke" text-anchor="start">Mauta</text><text x="870.0" y="646.9" font-size="12.5" fill="#222" font-weight="normal" textLength="47.0" lengthAdjust="spacingAndGlyphs" stroke="#fff" stroke-width="3" stroke-linejoin="round" paint-order="stroke" text-anchor="start">Treweng</text><text x="780.6" y="669.3" font-size="12.5" fill="#222" font-weight="normal" textLength="34.7" lengthAdjust="spacingAndGlyphs" stroke="#fff" stroke-width="3" stroke-linejoin="round" paint-order="stroke" text-anchor="start">Delaki</text><text x="987.0" y="482.9" font-size="12.5" fill="#222" font-weight="normal" textLength="23.6" lengthAdjust="spacingAndGlyphs" stroke="#fff" stroke-width="3" stroke-linejoin="round" paint-order="stroke" text-anchor="start">Alila</text><text x="1004.4" y="519.3" font-size="12.5" fill="#222" font-weight="normal" textLength="49.6" lengthAdjust="spacingAndGlyphs" stroke="#fff" stroke-width="3" stroke-linejoin="round" paint-order="stroke" text-anchor="start">Kalabahi</text><text x="1101.1" y="519.3" font-size="12.5" fill="#222" font-weight="normal" textLength="34.8" lengthAdjust="spacingAndGlyphs" stroke="#fff" stroke-width="3" stroke-linejoin="round" paint-order="stroke" text-anchor="start">Waimi</text><text x="1003.1" y="563.9" font-size="12.5" fill="#222" font-weight="normal" textLength="37.2" lengthAdjust="spacingAndGlyphs" stroke="#fff" stroke-width="3" stroke-linejoin="round" paint-order="stroke" text-anchor="start">Morba</text><text x="1119.8" y="554.7" font-size="12.5" fill="#222" font-weight="normal" textLength="58.2" lengthAdjust="spacingAndGlyphs" stroke="#fff" stroke-width="3" stroke-linejoin="round" paint-order="stroke" text-anchor="start">Pulau Alor</text><text x="972.1" y="601.7" font-size="12.5" fill="#222" font-weight="normal" textLength="36.0" lengthAdjust="spacingAndGlyphs" stroke="#fff" stroke-width="3" stroke-linejoin="round" paint-order="stroke" text-anchor="start">Orgen</text><text x="1030.4" y="614.8" font-size="12.5" fill="#222" font-weight="normal" textLength="45.9" lengthAdjust="spacingAndGlyphs" stroke="#fff" stroke-width="3" stroke-linejoin="round" paint-order="stroke" text-anchor="start">Lakatuli</text><text x="1193.3" y="514.1" font-size="12.5" fill="#222" font-weight="normal" textLength="50.9" lengthAdjust="spacingAndGlyphs" stroke="#fff" stroke-width="3" stroke-linejoin="round" paint-order="stroke" text-anchor="start">Maukuru</text><text x="1288.9" y="574.2" font-size="12.5" fill="#222" font-weight="normal" textLength="54.6" lengthAdjust="spacingAndGlyphs" stroke="#fff" stroke-width="3" stroke-linejoin="round" paint-order="stroke" text-anchor="start">Maritaing</text><text x="1203.3" y="582.7" font-size="12.5" fill="#222" font-weight="normal" textLength="52.1" lengthAdjust="spacingAndGlyphs" stroke="#fff" stroke-width="3" stroke-linejoin="round" paint-order="stroke" text-anchor="start">Purnama</text><text x="1140.0" y="596.5" font-size="12.5" fill="#222" font-weight="normal" textLength="53.3" lengthAdjust="spacingAndGlyphs" stroke="#fff" stroke-width="3" stroke-linejoin="round" paint-order="stroke" text-anchor="start">Langkuru</text></g><path d="M682.5 412.0 L683.8 520.0 L685.0 640.0 L686.8 737.0 L687.5 743.0" fill="none" stroke="#5c6e7e" stroke-width="1.2"/><path d="M688.0 743.0 L1000.0 741.0 L1340.0 738.5 L1420.5 737.5" fill="none" stroke="#5c6e7e" stroke-width="1.2"/><path d="M683.0 412.0 L1414.5 406.3" fill="none" stroke="#5c6e7e" stroke-width="1.2"/><path d="M1415.5 416.0 L1416.0 520.0 L1418.0 660.0 L1420.5 737.0" fill="none" stroke="#5c6e7e" stroke-width="1.2"/><text x="676.0" y="625.6" font-size="12.5" fill="#222" font-weight="normal" textLength="38.0" lengthAdjust="spacingAndGlyphs" stroke="#fff" stroke-width="3" stroke-linejoin="round" paint-order="stroke" text-anchor="start">Marisa</text><text x="370.0" y="541.0" font-size="13" fill="#3d3d3d" font-weight="normal" textLength="20.3" lengthAdjust="spacingAndGlyphs" stroke="#fff" stroke-width="3" stroke-linejoin="round" paint-order="stroke" text-anchor="start">oga</text><text x="500.3" y="529.4" font-size="13" fill="#3d3d3d" font-weight="normal" textLength="44.8" lengthAdjust="spacingAndGlyphs" stroke="#fff" stroke-width="3" stroke-linejoin="round" paint-order="stroke" text-anchor="start">Lamaau</text><text x="601.6" y="525.0" font-size="13" fill="#3d3d3d" font-weight="normal" textLength="33.3" lengthAdjust="spacingAndGlyphs" stroke="#fff" stroke-width="3" stroke-linejoin="round" paint-order="stroke" text-anchor="start">Roma</text><text x="645.0" y="541.3" font-size="13" fill="#3d3d3d" font-weight="normal" textLength="29.0" lengthAdjust="spacingAndGlyphs" stroke="#fff" stroke-width="3" stroke-linejoin="round" paint-order="stroke" text-anchor="start">Bean</text><text x="523.4" y="584.8" font-size="13" fill="#3d3d3d" font-weight="normal" textLength="49.2" lengthAdjust="spacingAndGlyphs" stroke="#fff" stroke-width="3" stroke-linejoin="round" paint-order="stroke" text-anchor="start">Waienga</text><text x="432.2" y="596.2" font-size="13" fill="#3d3d3d" font-weight="normal" textLength="53.6" lengthAdjust="spacingAndGlyphs" stroke="#fff" stroke-width="3" stroke-linejoin="round" paint-order="stroke" text-anchor="start">Lewoleba</text><text x="404.2" y="643.0" font-size="13" fill="#3d3d3d" font-weight="normal" textLength="41.6" lengthAdjust="spacingAndGlyphs" stroke="#fff" stroke-width="3" stroke-linejoin="round" paint-order="stroke" text-anchor="start">Belame</text><text x="456.8" y="662.5" font-size="13" fill="#3d3d3d" font-weight="normal" textLength="37.1" lengthAdjust="spacingAndGlyphs" stroke="#fff" stroke-width="3" stroke-linejoin="round" paint-order="stroke" text-anchor="start">Senaki</text><text x="381.0" y="678.7" font-size="13" fill="#3d3d3d" font-weight="normal" textLength="38.8" lengthAdjust="spacingAndGlyphs" stroke="#fff" stroke-width="3" stroke-linejoin="round" paint-order="stroke" text-anchor="start">Lolong</text><text x="427.3" y="698.7" font-size="13" fill="#3d3d3d" font-weight="normal" textLength="63.7" lengthAdjust="spacingAndGlyphs" stroke="#fff" stroke-width="3" stroke-linejoin="round" paint-order="stroke" text-anchor="start">Lamalera A</text><text x="517.0" y="690.3" font-size="13" fill="#3d3d3d" font-weight="normal" textLength="26.7" lengthAdjust="spacingAndGlyphs" stroke="#fff" stroke-width="3" stroke-linejoin="round" paint-order="stroke" text-anchor="start">Dulir</text><text x="1607.8" y="413.4" font-size="13" fill="#3d3d3d" font-weight="normal" textLength="63.3" lengthAdjust="spacingAndGlyphs" stroke="#fff" stroke-width="3" stroke-linejoin="round" paint-order="stroke" text-anchor="start">Pulau Liran</text><text x="1569.5" y="500.7" font-size="13" fill="#3d3d3d" font-weight="normal" textLength="24.2" lengthAdjust="spacingAndGlyphs" stroke="#fff" stroke-width="3" stroke-linejoin="round" paint-order="stroke" text-anchor="start">Pala</text><text x="1529.1" y="542.6" font-size="13" fill="#3d3d3d" font-weight="normal" textLength="77.5" lengthAdjust="spacingAndGlyphs" stroke="#fff" stroke-width="3" stroke-linejoin="round" paint-order="stroke" text-anchor="start">Vila Maumeta</text><text x="1611.3" y="676.3" font-size="13" fill="#3d3d3d" font-weight="normal" textLength="51.3" lengthAdjust="spacingAndGlyphs" stroke="#fff" stroke-width="3" stroke-linejoin="round" paint-order="stroke" text-anchor="start">Metinaro</text><text x="1340.4" y="718.1" font-size="13" fill="#3d3d3d" font-weight="normal" textLength="51.3" lengthAdjust="spacingAndGlyphs" stroke="#fff" stroke-width="3" stroke-linejoin="round" paint-order="stroke" text-anchor="start">Maubara</text><text x="1566.4" y="744.3" font-size="13" fill="#3d3d3d" font-weight="normal" textLength="43.3" lengthAdjust="spacingAndGlyphs" stroke="#fff" stroke-width="3" stroke-linejoin="round" paint-order="stroke" text-anchor="start">Fahi-Soi</text><text x="1534.4" y="776.0" font-size="13" fill="#3d3d3d" font-weight="normal" textLength="27.2" lengthAdjust="spacingAndGlyphs" stroke="#fff" stroke-width="3" stroke-linejoin="round" paint-order="stroke" text-anchor="start">Aileu</text><text x="1321.1" y="818.7" font-size="13" fill="#3d3d3d" font-weight="normal" textLength="38.5" lengthAdjust="spacingAndGlyphs" stroke="#fff" stroke-width="3" stroke-linejoin="round" paint-order="stroke" text-anchor="start">Atabae</text><text x="1402.9" y="817.5" font-size="13" fill="#3d3d3d" font-weight="normal" textLength="40.1" lengthAdjust="spacingAndGlyphs" stroke="#fff" stroke-width="3" stroke-linejoin="round" paint-order="stroke" text-anchor="start">Hatólia</text><text x="1452.6" y="829.4" font-size="13" fill="#3d3d3d" font-weight="normal" textLength="49.7" lengthAdjust="spacingAndGlyphs" stroke="#fff" stroke-width="3" stroke-linejoin="round" paint-order="stroke" text-anchor="start">Letefoho</text><text x="1537.6" y="831.0" font-size="13" fill="#3d3d3d" font-weight="normal" textLength="52.9" lengthAdjust="spacingAndGlyphs" stroke="#fff" stroke-width="3" stroke-linejoin="round" paint-order="stroke" text-anchor="start">Maubisse</text><text x="1598.5" y="823.1" font-size="13" fill="#3d3d3d" font-weight="normal" textLength="43.3" lengthAdjust="spacingAndGlyphs" stroke="#fff" stroke-width="3" stroke-linejoin="round" paint-order="stroke" text-anchor="start">Turiskai</text><text x="1385.3" y="862.9" font-size="13" fill="#3d3d3d" font-weight="normal" textLength="40.0" lengthAdjust="spacingAndGlyphs" stroke="#fff" stroke-width="3" stroke-linejoin="round" paint-order="stroke" text-anchor="start">Cailaco</text><text x="1444.0" y="875.3" font-size="13" fill="#3d3d3d" font-weight="normal" textLength="37.5" lengthAdjust="spacingAndGlyphs" stroke="#fff" stroke-width="3" stroke-linejoin="round" paint-order="stroke" text-anchor="start">Atsabe</text><text x="1264.4" y="897.5" font-size="13" fill="#3d3d3d" font-weight="normal" textLength="34.3" lengthAdjust="spacingAndGlyphs" stroke="#fff" stroke-width="3" stroke-linejoin="round" paint-order="stroke" text-anchor="start">Balibó</text><text x="1342.0" y="909.0" font-size="13" fill="#3d3d3d" font-weight="normal" textLength="44.9" lengthAdjust="spacingAndGlyphs" stroke="#fff" stroke-width="3" stroke-linejoin="round" paint-order="stroke" text-anchor="start">Maliana</text><text x="1499.0" y="911.9" font-size="13" fill="#3d3d3d" font-weight="normal" textLength="36.0" lengthAdjust="spacingAndGlyphs" stroke="#fff" stroke-width="3" stroke-linejoin="round" paint-order="stroke" text-anchor="start">Ainaro</text><text x="1574.4" y="915.5" font-size="13" fill="#3d3d3d" font-weight="normal" textLength="30.5" lengthAdjust="spacingAndGlyphs" stroke="#fff" stroke-width="3" stroke-linejoin="round" paint-order="stroke" text-anchor="start">Same</text><text x="1649.8" y="923.5" font-size="13" fill="#3d3d3d" font-weight="normal" textLength="24.0" lengthAdjust="spacingAndGlyphs" stroke="#fff" stroke-width="3" stroke-linejoin="round" paint-order="stroke" text-anchor="start">Alas</text><text x="1542.4" y="685.8" font-size="17" fill="#1a1a1a" font-weight="normal" textLength="24.0" lengthAdjust="spacingAndGlyphs" stroke="#fff" stroke-width="3" stroke-linejoin="round" paint-order="stroke" text-anchor="start">Dili</text><text x="1414.0" y="703.4" font-size="17" fill="#1a1a1a" font-weight="normal" textLength="41.8" lengthAdjust="spacingAndGlyphs" stroke="#fff" stroke-width="3" stroke-linejoin="round" paint-order="stroke" text-anchor="start">Likisá</text><text x="1460.6" y="770.1" font-size="17" fill="#1a1a1a" font-weight="normal" textLength="43.3" lengthAdjust="spacingAndGlyphs" stroke="#fff" stroke-width="3" stroke-linejoin="round" paint-order="stroke" text-anchor="start">Gleno</text></svg>
<div class="r" style="left:0px;top:0px;width:1678px;height:1px;background:#000;"></div>
<div class="r" style="left:0px;top:1px;width:1678px;height:1px;background:#fff;"></div>
<div class="t" style="left:758.50px;top:8.05px;font-size:14px;line-height:17px;color:#bdbdbd;font-weight:normal;transform:scaleX(0.9866);transform-origin:0 0;">Digitising Tutorial — QGIS</div>
<div class="r" style="left:1612px;top:19px;width:10px;height:2px;background:#b9b9b9;"></div>
<svg class="r" style="left:1634px;top:11px;" width="14" height="11" viewBox="0 0 14 11"><rect x="1.5" y="4.5" width="9" height="6" fill="none" stroke="#b9b9b9" stroke-width="1.2"/><path d="M3.5 4.5V1.5h9v6h-2" fill="none" stroke="#b9b9b9" stroke-width="1.2"/></svg>
<svg class="r" style="left:1657px;top:10px;" width="12" height="12" viewBox="0 0 12 12"><path d="M1 1L11 11M11 1L1 11" stroke="#b9b9b9" stroke-width="2"/></svg>
<svg class="r" style="left:4px;top:2px;" width="30" height="28" viewBox="0 0 30 28"><defs><linearGradient id="lg" x1="0" y1="0" x2="0" y2="1"><stop offset="0" stop-color="#95b21f"/><stop offset="1" stop-color="#5b9a2c"/></linearGradient></defs><path d="M18.1 21.3A8.4 8.4 0 1 1 22.9 15.9" fill="none" stroke="url(#lg)" stroke-width="4.4"/><path d="M18 17L25 23.8" stroke="#68a63a" stroke-width="4.6"/><path d="M13 11.8L16.8 12.3L19.6 15.2L17 18.2L13.4 15.2Z" fill="#ef7a1a"/><path d="M16.6 15.8L19.6 15.2L17 18.2Z" fill="#e6e040"/></svg>
<div class="r" style="left:413px;top:31px;width:65px;height:28px;background:#3089c8;"></div>
<div class="t" style="left:14.20px;top:34.22px;font-size:18.7px;line-height:22px;color:#000;font-weight:normal;transform:scaleX(1.0360);transform-origin:0 0;">Project</div>
<div class="r" style="left:44px;top:53px;width:4px;height:2px;background:#000;"></div>
<div class="t" style="left:90.40px;top:34.22px;font-size:18.7px;line-height:22px;color:#000;font-weight:normal;transform:scaleX(1.0458);transform-origin:0 0;">Edit</div>
<div class="r" style="left:90px;top:53px;width:13px;height:2px;background:#000;"></div>
<div class="t" style="left:139.80px;top:34.22px;font-size:18.7px;line-height:22px;color:#000;font-weight:normal;transform:scaleX(1.0200);transform-origin:0 0;">View</div>
<div class="r" style="left:140px;top:53px;width:13px;height:2px;background:#000;"></div>
<div class="t" style="left:196.70px;top:34.22px;font-size:18.7px;line-height:22px;color:#000;font-weight:normal;transform:scaleX(0.9662);transform-origin:0 0;">Layer</div>
<div class="r" style="left:197px;top:53px;width:10px;height:2px;background:#000;"></div>
<div class="t" style="left:257.00px;top:34.22px;font-size:18.7px;line-height:22px;color:#000;font-weight:normal;transform:scaleX(1.0241);transform-origin:0 0;">Settings</div>
<div class="r" style="left:257px;top:53px;width:13px;height:2px;background:#000;"></div>
<div class="t" style="left:341.60px;top:34.22px;font-size:18.7px;line-height:22px;color:#000;font-weight:normal;transform:scaleX(0.9831);transform-origin:0 0;">Plugins</div>
<div class="r" style="left:342px;top:53px;width:12px;height:2px;background:#000;"></div>
<div class="t" style="left:417.90px;top:34.22px;font-size:18.7px;line-height:22px;color:#fff;font-weight:normal;transform:scaleX(1.0450);transform-origin:0 0;">Vector</div>
<div class="r" style="left:456px;top:53px;width:11px;height:2px;background:#fff;"></div>
<div class="t" style="left:488.50px;top:34.22px;font-size:18.7px;line-height:22px;color:#000;font-weight:normal;transform:scaleX(0.9804);transform-origin:0 0;">Raster</div>
<div class="r" style="left:488px;top:53px;width:13px;height:2px;background:#000;"></div>
<div class="t" style="left:557.30px;top:34.22px;font-size:18.7px;line-height:22px;color:#000;font-weight:normal;transform:scaleX(0.9831);transform-origin:0 0;">Database</div>
<div class="r" style="left:557px;top:53px;width:13px;height:2px;background:#000;"></div>
<div class="t" style="left:650.30px;top:34.22px;font-size:18.7px;line-height:22px;color:#000;font-weight:normal;transform:scaleX(1.0233);transform-origin:0 0;">Web</div>
<div class="r" style="left:650px;top:53px;width:18px;height:2px;background:#000;"></div>
<div class="t" style="left:704.30px;top:34.22px;font-size:18.7px;line-height:22px;color:#000;font-weight:normal;transform:scaleX(0.9994);transform-origin:0 0;">Mesh</div>
<div class="r" style="left:704px;top:53px;width:16px;height:2px;background:#000;"></div>
<div class="t" style="left:765.00px;top:34.22px;font-size:18.7px;line-height:22px;color:#000;font-weight:normal;transform:scaleX(0.9091);transform-origin:0 0;">HCMGIS</div>
<div class="t" style="left:848.40px;top:34.22px;font-size:18.7px;line-height:22px;color:#000;font-weight:normal;transform:scaleX(0.9815);transform-origin:0 0;">Processing</div>
<div class="r" style="left:877px;top:53px;width:9px;height:2px;background:#000;"></div>
<div class="t" style="left:954.60px;top:34.22px;font-size:18.7px;line-height:22px;color:#000;font-weight:normal;transform:scaleX(1.0036);transform-origin:0 0;">Help</div>
<div class="r" style="left:955px;top:53px;width:14px;height:2px;background:#000;"></div>
<div class="r" style="left:3px;top:58px;width:1675px;height:1px;background:#c9c9c9;"></div>
<div class="r" style="left:3px;top:59px;width:1675px;height:38px;background:linear-gradient(#f8f8f8,#f0f0f0);"></div>
<div class="r" style="left:3px;top:97px;width:1675px;height:1px;background:#bdbdbd;"></div>
<div class="r" style="left:3px;top:98px;width:1675px;height:38px;background:linear-gradient(#f8f8f8,#f0f0f0);"></div>
<div class="r" style="left:3px;top:136px;width:1675px;height:1px;background:#bdbdbd;"></div>
<div class="r" style="left:3px;top:137px;width:1675px;height:38px;background:linear-gradient(#f8f8f8,#f0f0f0);"></div>
<div class="r" style="left:3px;top:175px;width:1675px;height:1px;background:#bdbdbd;"></div>
<div class="r" style="left:371px;top:176px;width:1307px;height:1px;background:#b8b8b8;"></div>
<div class="t" style="left:7.90px;top:178.42px;font-size:18.7px;line-height:22px;color:#000;font-weight:normal;transform:scaleX(1.0250);transform-origin:0 0;">Browser</div>
<svg class="r" style="left:337px;top:183px;" width="26" height="12" viewBox="0 0 26 12"><rect x="0.5" y="0.5" width="10" height="10.5" rx="2" fill="none" stroke="#777" /><rect x="3" y="4" width="4.5" height="4.5" fill="none" stroke="#777" stroke-width="1"/><path d="M4.5 4V2.5h4.5v4.5H7.5" fill="none" stroke="#777"/><rect x="14.5" y="0.5" width="10.5" height="10.5" rx="2" fill="none" stroke="#777"/><path d="M17 3L22.5 8.5M22.5 3L17 8.5" stroke="#666" stroke-width="2"/></svg>
<svg class="r" style="left:337px;top:397px;" width="26" height="12" viewBox="0 0 26 12"><rect x="0.5" y="0.5" width="10" height="10.5" rx="2" fill="none" stroke="#777" /><rect x="3" y="4" width="4.5" height="4.5" fill="none" stroke="#777" stroke-width="1"/><path d="M4.5 4V2.5h4.5v4.5H7.5" fill="none" stroke="#777"/><rect x="14.5" y="0.5" width="10.5" height="10.5" rx="2" fill="none" stroke="#777"/><path d="M17 3L22.5 8.5M22.5 3L17 8.5" stroke="#666" stroke-width="2"/></svg>
<svg class="r" style="left:337px;top:611px;" width="26" height="12" viewBox="0 0 26 12"><rect x="0.5" y="0.5" width="10" height="10.5" rx="2" fill="none" stroke="#777" /><rect x="3" y="4" width="4.5" height="4.5" fill="none" stroke="#777" stroke-width="1"/><path d="M4.5 4V2.5h4.5v4.5H7.5" fill="none" stroke="#777"/><rect x="14.5" y="0.5" width="10.5" height="10.5" rx="2" fill="none" stroke="#777"/><path d="M17 3L22.5 8.5M22.5 3L17 8.5" stroke="#666" stroke-width="2"/></svg>
<div class="r" style="left:3px;top:232px;width:361px;height:151px;background:#fff;border:1px solid #b4b4b4;box-sizing:border-box;"></div>
<div class="r" style="left:349px;top:233px;width:14px;height:149px;background:#f3f3f3;border-left:1px solid #cfcfcf;box-sizing:border-box;"></div>
<div class="r" style="left:350px;top:290px;width:13px;height:80px;background:#e0e0e0;"></div>
<svg class="r" style="left:350px;top:235px;" width="13" height="12" viewBox="0 0 13 12"><path d="M2.5 8L6.5 4L10.5 8Z" fill="#444"/></svg>
<svg class="r" style="left:350px;top:368px;" width="13" height="12" viewBox="0 0 13 12"><path d="M2.5 4L6.5 8L10.5 4Z" fill="#444"/></svg>
<div class="t" style="left:45.20px;top:235.22px;font-size:18.7px;line-height:22px;color:#000;font-weight:normal;transform:scaleX(0.9922);transform-origin:0 0;">Favorites</div>
<svg class="r" style="left:9px;top:265px;" width="8" height="10" viewBox="0 0 8 10"><path d="M1 1L6 5L1 9Z" fill="#555"/></svg>
<div class="t" style="left:45.20px;top:260.22px;font-size:18.7px;line-height:22px;color:#000;font-weight:normal;transform:scaleX(1.0032);transform-origin:0 0;">Spatial Bookmarks</div>
<svg class="r" style="left:9px;top:290px;" width="8" height="10" viewBox="0 0 8 10"><path d="M1 1L6 5L1 9Z" fill="#555"/></svg>
<div class="t" style="left:45.20px;top:285.22px;font-size:18.7px;line-height:22px;color:#000;font-weight:normal;transform:scaleX(1.0205);transform-origin:0 0;">Project Home</div>
<svg class="r" style="left:9px;top:315px;" width="8" height="10" viewBox="0 0 8 10"><path d="M1 1L6 5L1 9Z" fill="#555"/></svg>
<div class="t" style="left:45.20px;top:310.22px;font-size:18.7px;line-height:22px;color:#000;font-weight:normal;transform:scaleX(1.0003);transform-origin:0 0;">Home</div>
<svg class="r" style="left:9px;top:340px;" width="8" height="10" viewBox="0 0 8 10"><path d="M1 1L6 5L1 9Z" fill="#555"/></svg>
<div class="t" style="left:45.20px;top:335.22px;font-size:18.7px;line-height:22px;color:#000;font-weight:normal;">/</div>
<svg class="r" style="left:9px;top:365px;" width="8" height="10" viewBox="0 0 8 10"><path d="M1 1L6 5L1 9Z" fill="#555"/></svg>
<div class="t" style="left:45.20px;top:360.22px;font-size:18.7px;line-height:22px;color:#000;font-weight:normal;transform:scaleX(0.9619);transform-origin:0 0;">GeoPackage</div>
<svg class="r" style="left:22px;top:236px;" width="18" height="17" viewBox="0 0 18 17"><path d="M8.5 1L10.8 6.3L16.5 6.6L12.1 10.3L13.6 16L8.5 12.8L3.4 16L4.9 10.3L0.5 6.6L6.2 6.3Z" fill="#f6ec5a" stroke="#d8b81f" stroke-width="1"/></svg>
<svg class="r" style="left:24px;top:262px;" width="14" height="15" viewBox="0 0 14 15"><rect x="0.5" y="0.5" width="13" height="13" rx="1.5" fill="#e3e3e3" stroke="#c8c8c8"/><rect x="6" y="0" width="3" height="7" fill="#6f9fd8"/></svg>
<svg class="r" style="left:24px;top:288px;" width="14" height="14" viewBox="0 0 14 14"><rect x="0.5" y="0.5" width="13" height="13" fill="#8bc34a" stroke="#7aa84a"/><path d="M2 4L7 9L12 5" stroke="#fff" stroke-width="2" fill="none"/></svg>
<svg class="r" style="left:24px;top:313px;" width="14" height="14" viewBox="0 0 14 14"><rect x="0.5" y="0.5" width="13" height="13" fill="#f3f3f3" stroke="#999"/><path d="M3.5 11V7L7 4L10.5 7V11Z" fill="none" stroke="#333"/></svg>
<svg class="r" style="left:24px;top:338px;" width="14" height="14" viewBox="0 0 14 14"><path d="M0.5 2.5H5.5L7 4.5H13.5V13.5H0.5Z" fill="#eee" stroke="#aaa"/></svg>
<svg class="r" style="left:23px;top:362px;" width="16" height="16" viewBox="0 0 16 16"><path d="M1 5L8 1L15 5V12L8 15L1 12Z" fill="#f2cc30" stroke="#b08a10"/><circle cx="8" cy="5" r="3.5" fill="#5b8fc8"/></svg>
<svg class="r" style="left:12px;top:208px;" width="16" height="16" viewBox="0 0 16 16"><rect x="0.5" y="0.5" width="11" height="11" fill="#f0f0f0" stroke="#777"/><circle cx="11.5" cy="12.5" r="3" fill="#cfe6cf" stroke="#3f8f3f" stroke-width="1.5"/></svg>
<svg class="r" style="left:36px;top:208px;" width="16" height="16" viewBox="0 0 16 16"><path d="M2 7A6 6 0 0 1 13 4L14 2V7H9L11 5.5A4 4 0 0 0 4 7Z" fill="#4d8fd6"/><path d="M14 9A6 6 0 0 1 3 12L2 14V9H7L5 10.5A4 4 0 0 0 12 9Z" fill="#4d8fd6"/></svg>
<svg class="r" style="left:62px;top:208px;" width="15" height="16" viewBox="0 0 15 16"><path d="M0.5 1H14.5L9 8V15L6 13V8Z" fill="#5b88c4"/><rect x="1" y="1.5" width="13" height="1.5" fill="#f0e050"/></svg>
<svg class="r" style="left:87px;top:208px;" width="16" height="16" viewBox="0 0 16 16"><path d="M1 2H5M1 2V14" stroke="#aaa"/><rect x="4" y="5" width="3" height="3" fill="#f90"/><rect x="4" y="11" width="3" height="3" fill="#f90"/><path d="M10 15V7H7.5L11.5 1L15.5 7H13V15Z" fill="#5b88c4" stroke="#3a5f90" stroke-width=".8"/></svg>
<svg class="r" style="left:112px;top:208px;" width="15" height="15" viewBox="0 0 15 15"><circle cx="7.5" cy="7.5" r="7" fill="#5b88c4"/><rect x="6.5" y="6" width="2" height="6" fill="#fff"/><circle cx="7.5" cy="3.8" r="1.2" fill="#fff"/></svg>
<svg class="r" style="left:177px;top:385px;" width="16" height="3" viewBox="0 0 16 3"><rect x="0" y="1" width="1" height="1" fill="#aaa"/><rect x="3" y="1" width="1" height="1" fill="#aaa"/><rect x="6" y="1" width="1" height="1" fill="#aaa"/><rect x="9" y="1" width="1" height="1" fill="#aaa"/><rect x="12" y="1" width="1" height="1" fill="#aaa"/><rect x="15" y="1" width="1" height="1" fill="#aaa"/></svg>
<svg class="r" style="left:177px;top:599px;" width="16" height="3" viewBox="0 0 16 3"><rect x="0" y="1" width="1" height="1" fill="#aaa"/><rect x="3" y="1" width="1" height="1" fill="#aaa"/><rect x="6" y="1" width="1" height="1" fill="#aaa"/><rect x="9" y="1" width="1" height="1" fill="#aaa"/><rect x="12" y="1" width="1" height="1" fill="#aaa"/><rect x="15" y="1" width="1" height="1" fill="#aaa"/></svg>
<div class="t" style="left:7.20px;top:392.62px;font-size:18.7px;line-height:22px;color:#000;font-weight:normal;transform:scaleX(0.9532);transform-origin:0 0;">Layers</div>
<svg class="r" style="left:11px;top:421px;" width="17" height="17" viewBox="0 0 17 17"><path d="M1 9L9 5L11 11L4 15Z" fill="#f2c43a"/><path d="M1 9L9 5L10 8L2.5 12Z" fill="#4a8ad0"/><path d="M3 13L10 9.5L11 11L4 15Z" fill="#e84040"/><path d="M5 12L11 9L12 12L7 15Z" fill="#d9a860"/><path d="M10 8L16 2" stroke="#c9953a" stroke-width="2.5"/></svg>
<svg class="r" style="left:36px;top:421px;" width="17" height="17" viewBox="0 0 17 17"><rect x="1" y="5" width="11" height="9" fill="#eee" stroke="#888"/><rect x="4" y="2" width="8" height="9" fill="#eee" stroke="#888"/><circle cx="13" cy="13" r="3.5" fill="#5a5"/><path d="M11 13H15M13 11V15" stroke="#fff"/></svg>
<svg class="r" style="left:61px;top:421px;" width="19" height="18" viewBox="0 0 19 18"><ellipse cx="8" cy="8" rx="7.5" ry="4.5" fill="#e8e8e8" stroke="#999"/><circle cx="8" cy="8" r="3" fill="#5b88c4"/><path d="M13 14L18 14L15.5 17Z" fill="#555"/></svg>
<svg class="r" style="left:87px;top:421px;" width="17" height="18" viewBox="0 0 17 18"><path d="M0.5 1H14.5L9 8V15L6 13V8Z" fill="#5b88c4"/><rect x="1" y="1.5" width="13" height="1.5" fill="#f0e050"/><path d="M11 14L16 14L13.5 17Z" fill="#555"/></svg>
<svg class="r" style="left:111px;top:421px;" width="18" height="18" viewBox="0 0 18 18"><text x="0.5" y="11.5" font-size="19" fill="#6a2a80" font-family="Liberation Serif">ε</text><path d="M8 9H15L14 16H9Z" fill="#bbb" stroke="#999" stroke-width=".6"/></svg>
<svg class="r" style="left:133px;top:428px;" width="9" height="6" viewBox="0 0 9 6"><path d="M0 0H8L4 5Z" fill="#555"/></svg>
<svg class="r" style="left:149px;top:421px;" width="16" height="17" viewBox="0 0 16 17"><path d="M1 2H5M1 2V14" stroke="#aaa"/><rect x="4" y="5" width="3" height="3" fill="#f90"/><rect x="4" y="11" width="3" height="3" fill="#f90"/><path d="M10 1V9H7.5L11.5 15L15.5 9H13V1Z" fill="#5b88c4" stroke="#3a5f90" stroke-width=".8"/></svg>
<svg class="r" style="left:174px;top:421px;" width="16" height="17" viewBox="0 0 16 17"><path d="M1 2H5M1 2V14" stroke="#aaa"/><rect x="4" y="5" width="3" height="3" fill="#f90"/><rect x="4" y="11" width="3" height="3" fill="#f90"/><path d="M10 15V7H7.5L11.5 1L15.5 7H13V15Z" fill="#5b88c4" stroke="#3a5f90" stroke-width=".8"/></svg>
<svg class="r" style="left:198px;top:421px;" width="16" height="17" viewBox="0 0 16 17"><rect x="0.5" y="0.5" width="12" height="12" fill="#f6f6f6" stroke="#888"/><rect x="9" y="11" width="7" height="5" rx="1" fill="#e33"/><rect x="10.5" y="13" width="4" height="1.2" fill="#fff"/></svg>
<div class="r" style="left:3px;top:446px;width:361px;height:151px;background:#fff;border:1px solid #b4b4b4;box-sizing:border-box;"></div>
<div class="r" style="left:4px;top:447px;width:345px;height:25px;background:#3089c8;"></div>
<svg class="r" style="left:27px;top:452px;" width="14" height="14" viewBox="0 0 14 14"><rect x="0.5" y="0.5" width="13" height="13" fill="#fff" stroke="#6a6a6a"/><path d="M3 7L6 10.5L11 3" fill="none" stroke="#111" stroke-width="1.7"/></svg>
<div class="r" style="left:47px;top:452px;width:16px;height:15px;background:#4f3424;border:1px solid #333;box-sizing:border-box;"></div>
<div class="t" style="left:69.80px;top:449.39px;font-size:18.2px;line-height:22px;color:#fff;font-weight:bold;"><span style="text-decoration:underline;text-underline-offset:2px">Language Polygons Map 3</span></div>
<svg class="r" style="left:10px;top:480px;" width="9" height="6" viewBox="0 0 9 6"><path d="M0 0H8L4 5Z" fill="#555"/></svg>
<svg class="r" style="left:27px;top:477px;" width="14" height="14" viewBox="0 0 14 14"><rect x="0.5" y="0.5" width="13" height="13" fill="#fff" stroke="#6a6a6a"/><path d="M3 7L6 10.5L11 3" fill="none" stroke="#111" stroke-width="1.7"/></svg>
<svg class="r" style="left:47px;top:476px;" width="16" height="16" viewBox="0 0 16 16"><rect x="0" y="0" width="16" height="16" fill="#fff"/><rect x="8" y="0" width="4" height="4" fill="#223"/><rect x="12" y="4" width="4" height="4" fill="#223"/><rect x="4" y="4" width="4" height="4" fill="#5a7aa0"/><rect x="8" y="8" width="4" height="4" fill="#223"/><rect x="0" y="12" width="4" height="4" fill="#5a7aa0"/><rect x="4" y="12" width="4" height="4" fill="#223"/><rect x="12" y="12" width="4" height="4" fill="#8aa"/></svg>
<div class="r" style="left:4px;top:474px;width:345px;height:22px;overflow:hidden">
<div class="t" style="left:65.80px;top:0.39px;font-size:18.2px;line-height:22px;color:#000;font-weight:bold;transform:scaleX(1.0381);transform-origin:0 0;">Map 3 The Alor-Pantar language</div>
</div>
<div class="r" style="left:47px;top:501px;width:16px;height:16px;background:#f00;"></div>
<div class="t" style="left:69.80px;top:499.22px;font-size:18.7px;line-height:22px;color:#000;font-weight:normal;transform:scaleX(0.9602);transform-origin:0 0;">Band 1 (Red)</div>
<div class="r" style="left:47px;top:526px;width:16px;height:16px;background:#0f0;"></div>
<div class="t" style="left:69.80px;top:524.22px;font-size:18.7px;line-height:22px;color:#000;font-weight:normal;transform:scaleX(0.9628);transform-origin:0 0;">Band 2 (Green)</div>
<div class="r" style="left:47px;top:551px;width:16px;height:16px;background:#00f;"></div>
<div class="t" style="left:69.80px;top:549.22px;font-size:18.7px;line-height:22px;color:#000;font-weight:normal;transform:scaleX(0.9724);transform-origin:0 0;">Band 3 (Blue)</div>
<div class="r" style="left:4px;top:573px;width:345px;height:10px;overflow:hidden;"><svg class="r" style="left:23px;top:4px" width="14" height="14"><rect x="0.5" y="0.5" width="13" height="13" fill="#fff" stroke="#6a6a6a"/><path d="M3 7L6 10.5L11 3" fill="none" stroke="#111" stroke-width="1.7"/></svg><svg class="r" style="left:43px;top:4px" width="16" height="14"><rect x="0" y="0" width="16" height="14" fill="#5b7ba8"/><path d="M0 5H16M5 0V14M10 0V14" stroke="#fff"/></svg><div class="t" style="left:65.8px;top:1px;font-size:18.2px;line-height:22px;font-weight:bold">Carte Basic</div></div>
<div class="r" style="left:349px;top:447px;width:14px;height:136px;background:#f3f3f3;border-left:1px solid #cfcfcf;box-sizing:border-box;"></div>
<div class="r" style="left:350px;top:545px;width:13px;height:24px;background:#e0e0e0;"></div>
<svg class="r" style="left:350px;top:447px;" width="13" height="12" viewBox="0 0 13 12"><path d="M2.5 8L6.5 4L10.5 8Z" fill="#444"/></svg>
<svg class="r" style="left:350px;top:570px;" width="13" height="12" viewBox="0 0 13 12"><path d="M2.5 4L6.5 8L10.5 4Z" fill="#444"/></svg>
<div class="r" style="left:4px;top:583px;width:359px;height:13px;background:#f3f3f3;border-top:1px solid #cfcfcf;box-sizing:border-box;"></div>
<div class="r" style="left:277px;top:584px;width:59px;height:12px;background:#e0e0e0;"></div>
<div class="r" style="left:17px;top:584px;width:1px;height:12px;background:#d8d8d8;"></div>
<div class="r" style="left:336px;top:584px;width:1px;height:12px;background:#d8d8d8;"></div>
<div class="r" style="left:349px;top:584px;width:1px;height:12px;background:#d8d8d8;"></div>
<svg class="r" style="left:6px;top:584px;" width="10" height="12" viewBox="0 0 10 12"><path d="M7 2L3 6L7 10Z" fill="#444"/></svg>
<svg class="r" style="left:337px;top:584px;" width="10" height="12" viewBox="0 0 10 12"><path d="M3 2L7 6L3 10Z" fill="#444"/></svg>
<div class="t" style="left:7.40px;top:608.00px;font-size:15px;line-height:18px;color:#000;font-weight:normal;transform:scaleX(0.9914);transform-origin:0 0;">Statistics</div>
<div class="r" style="left:4px;top:629px;width:360px;height:31px;background:linear-gradient(#fbfbfb,#ececec);border:1px solid #bcbcbc;border-radius:3px;box-sizing:border-box;"></div>
<svg class="r" style="left:8px;top:637px;" width="17" height="12" viewBox="0 0 17 12"><path d="M1 3C3 0 6 3 9 2C12 1 15 0 16 3C17 6 15 9 12 8C9 7 6 10 3 10C1 10 0 6 1 3Z" fill="#ddd" stroke="#999"/></svg>
<div class="r" style="left:4px;top:630px;width:340px;height:28px;overflow:hidden">
<div class="t" style="left:24.20px;top:4.29px;font-size:18.5px;line-height:22px;color:#000;font-weight:normal;transform:scaleX(1.0330);transform-origin:0 0;">Language Polygons Map 3 Multipolygon</div>
</div>
<svg class="r" style="left:348px;top:641px;" width="10" height="6" viewBox="0 0 10 6"><path d="M0 0H9L4.5 5Z" fill="#555"/></svg>
<div class="r" style="left:4px;top:663px;width:330px;height:31px;background:#fff;border:1px solid #bcbcbc;border-radius:3px;box-sizing:border-box;"></div>
<div class="r" style="left:314px;top:664px;width:19px;height:29px;background:linear-gradient(#fbfbfb,#ececec);border-radius:0 3px 3px 0;"></div>
<div class="r" style="left:313px;top:664px;width:1px;height:29px;background:#b8b8b8;"></div>
<svg class="r" style="left:319px;top:676px;" width="9" height="6" viewBox="0 0 9 6"><path d="M0 0H8L4 5Z" fill="#555"/></svg>
<div class="r" style="left:340px;top:663px;width:24px;height:31px;background:linear-gradient(#fbfbfb,#ececec);border:1px solid #bcbcbc;border-radius:3px;box-sizing:border-box;"></div>
<svg class="r" style="left:345px;top:666px;" width="14" height="18" viewBox="0 0 14 18"><text x="1" y="15.5" font-size="21" fill="#5a2a72" font-family="Liberation Serif">ε</text></svg>
<div class="r" style="left:4px;top:697px;width:360px;height:198px;background:#fff;border:1px solid #bcbcbc;box-sizing:border-box;"></div>
<div class="r" style="left:5px;top:698px;width:199px;height:23px;background:linear-gradient(#f6f6f6,#ebebeb);border-bottom:1px solid #cfcfcf;box-sizing:border-box;"></div>
<div class="r" style="left:204px;top:698px;width:159px;height:22px;background:#f0f0f0;"></div>
<div class="r" style="left:103px;top:698px;width:1px;height:23px;background:#d0d0d0;"></div>
<div class="r" style="left:203px;top:698px;width:1px;height:23px;background:#d0d0d0;"></div>
<div class="t" style="left:27.60px;top:701.50px;font-size:15px;line-height:18px;color:#000;font-weight:normal;transform:scaleX(1.0207);transform-origin:0 0;">Statistic</div>
<div class="t" style="left:134.80px;top:701.50px;font-size:15px;line-height:18px;color:#000;font-weight:normal;transform:scaleX(1.0174);transform-origin:0 0;">Value</div>
<svg class="r" style="left:3px;top:905px;" width="14" height="14" viewBox="0 0 14 14"><rect x="0.5" y="0.5" width="13" height="13" fill="#fff" stroke="#8a8a8a"/></svg>
<div class="t" style="left:22.00px;top:902.22px;font-size:18.7px;line-height:22px;color:#000;font-weight:normal;transform:scaleX(1.0241);transform-origin:0 0;">Selected features only</div>
<svg class="r" style="left:281px;top:904px;" width="12" height="15" viewBox="0 0 12 15"><rect x="0.5" y="3.5" width="8" height="10" fill="#eee" stroke="#aaa"/><rect x="3.5" y="0.5" width="8" height="10" fill="#f6f6f6" stroke="#aaa"/></svg>
<svg class="r" style="left:305px;top:903px;" width="17" height="17" viewBox="0 0 17 17"><path d="M2 7A6 6 0 0 1 13 4L14 2V7H9L11 5.5A4 4 0 0 0 4 7Z" fill="#4d8fd6"/><path d="M14 9A6 6 0 0 1 3 12L2 14V9H7L5 10.5A4 4 0 0 0 12 9Z" fill="#4d8fd6"/></svg>
<div class="r" style="left:329px;top:899px;width:35px;height:29px;background:linear-gradient(#fbfbfb,#ececec);border:1px solid #bcbcbc;border-radius:3px;box-sizing:border-box;"></div>
<div class="t" style="left:336.00px;top:902.22px;font-size:18.7px;line-height:22px;color:#000;font-weight:normal;">…</div>
<svg class="r" style="left:354px;top:919px;" width="7" height="5" viewBox="0 0 7 5"><path d="M0 0H6L3 4Z" fill="#555"/></svg>
<div class="r" style="left:7px;top:932px;width:338px;height:30px;background:#fff;border:1px solid #b8b8b8;border-radius:3px;box-sizing:border-box;"></div>
<svg class="r" style="left:15px;top:939px;" width="14" height="15" viewBox="0 0 14 15"><circle cx="8" cy="6" r="4.3" fill="none" stroke="#888" stroke-width="1.5"/><path d="M5 9L1 13" stroke="#888" stroke-width="2"/></svg>
<div class="t" style="left:36.00px;top:936.22px;font-size:18.7px;line-height:22px;color:#8a8a8a;font-weight:normal;transform:scaleX(1.0131);transform-origin:0 0;">Type to locate (Ctrl+K)</div>
<div class="t" style="left:628.70px;top:935.96px;font-size:18px;line-height:22px;color:#000;font-weight:normal;transform:scaleX(0.8971);transform-origin:0 0;">Coordinate</div>
<div class="r" style="left:712px;top:932px;width:137px;height:29px;background:#fff;border:1px solid #b8b8b8;border-radius:3px;box-sizing:border-box;"></div>
<div class="t" style="left:718.40px;top:935.96px;font-size:18px;line-height:22px;color:#000;font-weight:normal;transform:scaleX(0.8612);transform-origin:0 0;">-7.553°, 123.595°</div>
<svg class="r" style="left:852px;top:936px;" width="17" height="18" viewBox="0 0 17 18"><path d="M4 3C8 1 13 4 13 9C13 14 9 16 6 15C3 14 2 10 3 7" fill="none" stroke="#333" stroke-width="2"/><circle cx="9" cy="10" r="2.5" fill="none" stroke="#333" stroke-width="1.3"/><path d="M12 1L16 5" stroke="#333"/></svg>
<div class="t" style="left:882.50px;top:935.96px;font-size:18px;line-height:22px;color:#000;font-weight:normal;transform:scaleX(0.7884);transform-origin:0 0;">Scale</div>
<div class="r" style="left:922px;top:932px;width:121px;height:29px;background:#fff;border:1px solid #b8b8b8;border-radius:3px;box-sizing:border-box;"></div>
<div class="r" style="left:1022px;top:933px;width:1px;height:27px;background:#d6d6d6;"></div>
<svg class="r" style="left:1028px;top:944px;" width="9" height="6" viewBox="0 0 9 6"><path d="M0 0H8L4 5Z" fill="#555"/></svg>
<div class="t" style="left:927.60px;top:935.96px;font-size:18px;line-height:22px;color:#000;font-weight:normal;transform:scaleX(0.8658);transform-origin:0 0;">1:748704</div>
<svg class="r" style="left:1054px;top:936px;" width="14" height="18" viewBox="0 0 14 18"><path d="M3.5 8V5A3.5 3.5 0 0 1 10.5 5V8" fill="none" stroke="#555" stroke-width="2"/><rect x="1.5" y="8" width="11" height="9" rx="1.5" fill="#555"/></svg>
<div class="t" style="left:1076.90px;top:935.96px;font-size:18px;line-height:22px;color:#000;font-weight:normal;transform:scaleX(0.9185);transform-origin:0 0;">Magnifier</div>
<div class="r" style="left:1149px;top:932px;width:105px;height:29px;background:#fff;border:1px solid #b8b8b8;border-radius:3px;box-sizing:border-box;"></div>
<div class="r" style="left:1239px;top:933px;width:1px;height:27px;background:#d6d6d6;"></div>
<svg class="r" style="left:1242px;top:937px;" width="10" height="20" viewBox="0 0 10 20"><path d="M1 6L4.5 2L8 6Z" fill="#555"/><path d="M1 13L4.5 17L8 13Z" fill="#555"/></svg>
<div class="t" style="left:1155.00px;top:935.96px;font-size:18px;line-height:22px;color:#000;font-weight:normal;transform:scaleX(0.8406);transform-origin:0 0;">100%</div>
<div class="t" style="left:1263.80px;top:935.96px;font-size:18px;line-height:22px;color:#000;font-weight:normal;transform:scaleX(0.9098);transform-origin:0 0;">Rotation</div>
<div class="r" style="left:1335px;top:932px;width:105px;height:29px;background:#fff;border:1px solid #b8b8b8;border-radius:3px;box-sizing:border-box;"></div>
<div class="r" style="left:1425px;top:933px;width:1px;height:27px;background:#d6d6d6;"></div>
<svg class="r" style="left:1428px;top:937px;" width="10" height="20" viewBox="0 0 10 20"><path d="M1 6L4.5 2L8 6Z" fill="#555"/><path d="M1 13L4.5 17L8 13Z" fill="#555"/></svg>
<div class="t" style="left:1340.20px;top:935.96px;font-size:18px;line-height:22px;color:#000;font-weight:normal;transform:scaleX(0.8328);transform-origin:0 0;">0.0 °</div>
<svg class="r" style="left:1446px;top:939px;" width="14" height="14" viewBox="0 0 14 14"><rect x="0.5" y="0.5" width="13" height="13" fill="#fff" stroke="#6a6a6a"/><path d="M3 7L6 10.5L11 3" fill="none" stroke="#111" stroke-width="1.7"/></svg>
<div class="t" style="left:1465.90px;top:935.96px;font-size:18px;line-height:22px;color:#000;font-weight:normal;transform:scaleX(0.8757);transform-origin:0 0;">Render</div>
<svg class="r" style="left:1533px;top:938px;" width="15" height="15" viewBox="0 0 15 15"><circle cx="7.5" cy="7.5" r="6.5" fill="none" stroke="#666" stroke-width="1.2"/><ellipse cx="7.5" cy="7.5" rx="3" ry="6.5" fill="none" stroke="#666"/><path d="M1 7.5H14M2 4.5H13M2 10.5H13" stroke="#666"/></svg>
<div class="t" style="left:1552.70px;top:935.96px;font-size:18px;line-height:22px;color:#000;font-weight:normal;transform:scaleX(0.8068);transform-origin:0 0;">EPSG:4326</div>
<svg class="r" style="left:1653px;top:937px;" width="18" height="16" viewBox="0 0 18 16"><path d="M9 1C13.5 1 17 3.8 17 7C17 10.2 13.5 13 9 13L4 15.5L5.5 12C3 11 1 9 1 7C1 3.8 4.5 1 9 1Z" fill="#555"/><circle cx="5.5" cy="7" r="1.2" fill="#fff"/><circle cx="9" cy="7" r="1.2" fill="#fff"/><circle cx="12.5" cy="7" r="1.2" fill="#fff"/></svg>
<svg class="r" style="left:7px;top:68px;" width="5" height="20" viewBox="0 0 5 20"><rect x="1" y="2" width="1" height="1" fill="#b8b8b8"/><rect x="1" y="6" width="1" height="1" fill="#b8b8b8"/><rect x="1" y="9" width="1" height="1" fill="#b8b8b8"/><rect x="1" y="12" width="1" height="1" fill="#b8b8b8"/><rect x="1" y="16" width="1" height="1" fill="#b8b8b8"/><rect x="4" y="2" width="1" height="1" fill="#b8b8b8"/><rect x="4" y="6" width="1" height="1" fill="#b8b8b8"/><rect x="4" y="9" width="1" height="1" fill="#b8b8b8"/><rect x="4" y="12" width="1" height="1" fill="#b8b8b8"/><rect x="4" y="16" width="1" height="1" fill="#b8b8b8"/></svg>
<svg class="r" style="left:23px;top:66px;" width="18" height="23" viewBox="0 0 18 23"><path d="M1 1H11L17 7V22H1Z" fill="#fff" stroke="#6b6b6b" stroke-width="1.2"/><path d="M11 1V7H17" fill="none" stroke="#6b6b6b" stroke-width="1"/></svg>
<svg class="r" style="left:53px;top:68px;" width="24" height="19" viewBox="0 0 24 19"><path d="M1 2H8L10 4H20V8H1Z" fill="#f2c94c"/><path d="M1 17L4 7H23L20 17Z" fill="#f9d65b" stroke="#d6b030" stroke-width=".8"/><path d="M1 2V17" stroke="#d6b030"/></svg>
<svg class="r" style="left:88px;top:67px;" width="21" height="22" viewBox="0 0 21 22"><rect x="0.5" y="0.5" width="20" height="21" rx="3" fill="#5b8ac6" stroke="#3f6aa3"/><rect x="3" y="2" width="14" height="8" fill="#e8e8e8"/><path d="M4.5 4H15.5M4.5 6H15.5M4.5 8H15.5" stroke="#888" stroke-width=".8"/><rect x="4" y="13" width="12" height="7" fill="#fff"/><rect x="6" y="14.5" width="2" height="4" fill="#3f6aa3"/></svg>
<svg class="r" style="left:120px;top:67px;" width="24" height="23" viewBox="0 0 24 23"><path d="M1 1H17L22 6V19H1Z" fill="#fff" stroke="#777"/><rect x="2" y="2" width="4" height="19" fill="#f3cf4a" stroke="#c9a20c" stroke-width=".6"/><rect x="2" y="2" width="9" height="4" fill="#f3cf4a"/><rect x="7" y="7" width="10" height="10" fill="none" stroke="#aac4ea"/><rect x="13" y="12" width="10" height="10" rx="2" fill="#c9a20c"/><path d="M18 13.5V20.5M15 15.2L21 18.8M15 18.8L21 15.2" stroke="#fff" stroke-width="1.3"/></svg>
<svg class="r" style="left:153px;top:67px;" width="24" height="23" viewBox="0 0 24 23"><path d="M1 1H17L22 6V19H1Z" fill="#fff" stroke="#777"/><rect x="3.5" y="3.5" width="15" height="13" fill="none" stroke="#aac4ea"/><path d="M9 8L20 20" stroke="#d9b55a" stroke-width="3.2"/><circle cx="8" cy="7" r="3.2" fill="none" stroke="#888" stroke-width="1.8"/></svg>
<svg class="r" style="left:187px;top:67px;" width="22" height="22" viewBox="0 0 22 22"><circle cx="5" cy="5" r="4.3" fill="#e06030"/><path d="M12 9L20 2" stroke="#4a78b8" stroke-width="2"/><rect x="1" y="12" width="8" height="8" fill="#88b888" stroke="#5e8e5e" stroke-width=".6"/><text x="12" y="20" font-size="11" fill="#555" font-family="Liberation Sans">a</text></svg>
<svg class="r" style="left:221px;top:68px;" width="5" height="20" viewBox="0 0 5 20"><rect x="1" y="2" width="1" height="1" fill="#b8b8b8"/><rect x="1" y="6" width="1" height="1" fill="#b8b8b8"/><rect x="1" y="9" width="1" height="1" fill="#b8b8b8"/><rect x="1" y="12" width="1" height="1" fill="#b8b8b8"/><rect x="1" y="16" width="1" height="1" fill="#b8b8b8"/><rect x="4" y="2" width="1" height="1" fill="#b8b8b8"/><rect x="4" y="6" width="1" height="1" fill="#b8b8b8"/><rect x="4" y="9" width="1" height="1" fill="#b8b8b8"/><rect x="4" y="12" width="1" height="1" fill="#b8b8b8"/><rect x="4" y="16" width="1" height="1" fill="#b8b8b8"/></svg>
<svg class="r" style="left:236px;top:66px;" width="21" height="24" viewBox="0 0 21 24"><path d="M6 22C4 19 1.5 15.5 1 13.5C0.6 11.8 2.6 11 3.8 12.4L6 15V6.5C6 5 8.4 5 8.4 6.5V12V3.5C8.4 2 10.8 2 10.8 3.5V12V4C10.8 2.6 13.2 2.6 13.2 4V12.5V6C13.2 4.6 15.6 4.6 15.6 6V15.5C15.6 18.5 14.6 20.5 13.6 22.5Z" fill="#fff" stroke="#1a1a1a" stroke-width="1.1" stroke-linejoin="round"/><path d="M8.4 8V12M10.8 8V12M13.2 8V12.5" stroke="#1a1a1a" stroke-width=".9"/></svg>
<svg class="r" style="left:267px;top:67px;" width="24" height="22" viewBox="0 0 24 22"><rect x="2" y="3" width="14" height="13" fill="#f9df40" stroke="#c9a20c" stroke-width=".6"/><path d="M11 0L15 5H13V9H17V7L22 11L17 15V13H13V17H15L11 22L7 17H9V13H5V15L0 11L5 7V9H9V5H7Z" fill="#5b8ac6" stroke="#3f6aa3" stroke-width=".5"/></svg>
<div class="r" style="left:296px;top:63px;width:32px;height:31px;background:#dcdcdc;border:1px solid #b9b9b9;border-radius:3px;box-sizing:border-box;"></div>
<svg class="r" style="left:300px;top:67px;" width="24" height="23" viewBox="0 0 24 23"><path d="M1.5 21L7.5 15" stroke="#222" stroke-width="4"/><path d="M2 20.5L7 15.5" stroke="#f3cf4a" stroke-width="2.2"/><circle cx="14" cy="9" r="7.8" fill="#efefef" stroke="#444" stroke-width="1.3"/><path d="M14 4.5V13.5M9.5 9H18.5" stroke="#4a78b8" stroke-width="2.2"/></svg>
<svg class="r" style="left:333px;top:67px;" width="24" height="23" viewBox="0 0 24 23"><path d="M1.5 21L7.5 15" stroke="#222" stroke-width="4"/><path d="M2 20.5L7 15.5" stroke="#f3cf4a" stroke-width="2.2"/><circle cx="14" cy="9" r="7.8" fill="#efefef" stroke="#444" stroke-width="1.3"/><path d="M9.5 9H18.5" stroke="#4a78b8" stroke-width="2.2"/></svg>
<svg class="r" style="left:366px;top:66px;" width="25" height="24" viewBox="0 0 25 24"><path d="M1.5 21L7.5 15" stroke="#222" stroke-width="4"/><path d="M2 20.5L7 15.5" stroke="#f3cf4a" stroke-width="2.2"/><circle cx="13" cy="10" r="7" fill="#e8e8e8" stroke="#999"/><path d="M3 1H9L3 7Z M23 1H17L23 7Z M23 21H17L23 15Z" fill="#5b8ac6"/></svg>
<svg class="r" style="left:398px;top:67px;" width="15" height="23" viewBox="0 0 15 23"><rect x="1" y="3" width="12" height="11" fill="#f9df40" stroke="#c9a20c" stroke-width=".6"/><path d="M1.5 21L7.5 15" stroke="#222" stroke-width="4"/><path d="M2 20.5L7 15.5" stroke="#f3cf4a" stroke-width="2.2"/><circle cx="14" cy="9" r="7.8" fill="#f0efe0" stroke="#999"/></svg>
<svg class="r" style="left:696px;top:67px;" width="23" height="23" viewBox="0 0 23 23"><circle cx="11.5" cy="11.5" r="10.5" fill="#f3f3f3" stroke="#555" stroke-width="1.2"/><circle cx="11.5" cy="11.5" r="8.5" fill="none" stroke="#5b8ac6" stroke-width="1" stroke-dasharray="1 3.2"/><path d="M11.5 5V11.5L15 14" stroke="#444" stroke-width="1.2" fill="none"/></svg>
<svg class="r" style="left:730px;top:67px;" width="22" height="22" viewBox="0 0 22 22"><path d="M2 10A9 9 0 0 1 18 5L20 2V10H12L15 7A6 6 0 0 0 5 10Z" fill="#4d8fd6"/><path d="M20 12A9 9 0 0 1 4 17L2 20V12H10L7 15A6 6 0 0 0 17 12Z" fill="#4d8fd6"/></svg>
<svg class="r" style="left:765px;top:68px;" width="5" height="20" viewBox="0 0 5 20"><rect x="1" y="2" width="1" height="1" fill="#b8b8b8"/><rect x="1" y="6" width="1" height="1" fill="#b8b8b8"/><rect x="1" y="9" width="1" height="1" fill="#b8b8b8"/><rect x="1" y="12" width="1" height="1" fill="#b8b8b8"/><rect x="1" y="16" width="1" height="1" fill="#b8b8b8"/><rect x="4" y="2" width="1" height="1" fill="#b8b8b8"/><rect x="4" y="6" width="1" height="1" fill="#b8b8b8"/><rect x="4" y="9" width="1" height="1" fill="#b8b8b8"/><rect x="4" y="12" width="1" height="1" fill="#b8b8b8"/><rect x="4" y="16" width="1" height="1" fill="#b8b8b8"/></svg>
<svg class="r" style="left:778px;top:68px;" width="24" height="22" viewBox="0 0 24 22"><rect x="1" y="1" width="21" height="19" fill="#e6e6e6" stroke="#222" stroke-width="1" stroke-dasharray="2 1.5"/><rect x="2" y="2" width="13" height="13" fill="#f9df40" stroke="#c9a20c" stroke-width=".6"/><path d="M9 8L9 21L12 18L15 22L17 21L14 17H18Z" fill="#fff" stroke="#333" stroke-width=".9"/></svg>
<svg class="r" style="left:808px;top:76px;" width="8" height="5" viewBox="0 0 8 5"><path d="M0 0H8L4 4.5Z" fill="#555"/></svg>
<svg class="r" style="left:825px;top:69px;" width="21" height="19" viewBox="0 0 21 19"><rect x="6" y="6" width="14" height="12" fill="#f9df40" stroke="#c9a20c" stroke-width=".8"/><rect x="1" y="1" width="14" height="11" rx="1.5" fill="#e4e4e4" stroke="#777"/><rect x="3.5" y="3.5" width="9" height="2.5" fill="#fff" stroke="#888" stroke-width=".6"/><rect x="3.5" y="7.5" width="9" height="2.5" fill="#fff" stroke="#888" stroke-width=".6"/></svg>
<svg class="r" style="left:853px;top:76px;" width="8" height="5" viewBox="0 0 8 5"><path d="M0 0H8L4 4.5Z" fill="#555"/></svg>
<svg class="r" style="left:869px;top:68px;" width="24" height="22" viewBox="0 0 24 22"><rect x="1" y="1" width="12" height="12" fill="#f9df40" stroke="#c9a20c" stroke-width=".8"/><rect x="5" y="5" width="12" height="12" fill="#f9df40" stroke="#c9a20c" stroke-width=".8"/><rect x="13" y="13" width="9" height="8" rx="2" fill="#e0202a"/><circle cx="17.5" cy="17" r="2.8" fill="none" stroke="#fff" stroke-width="1"/><path d="M15.5 19L19.5 15" stroke="#fff"/></svg>
<svg class="r" style="left:898px;top:76px;" width="8" height="5" viewBox="0 0 8 5"><path d="M0 0H8L4 4.5Z" fill="#555"/></svg>
<svg class="r" style="left:914px;top:67px;" width="23" height="24" viewBox="0 0 23 24"><rect x="1" y="1" width="13" height="13" fill="#f9df40" stroke="#c9a20c" stroke-width=".8"/><path d="M18 13A3.5 3.5 0 0 1 18 20L18 24L17 20A3.5 3.5 0 0 1 18 13Z" fill="#6b8fb5"/><circle cx="18" cy="16.5" r="1.5" fill="#fff"/></svg>
<svg class="r" style="left:943px;top:76px;" width="8" height="5" viewBox="0 0 8 5"><path d="M0 0H8L4 4.5Z" fill="#555"/></svg>
<svg class="r" style="left:961px;top:68px;" width="5" height="20" viewBox="0 0 5 20"><rect x="1" y="2" width="1" height="1" fill="#b8b8b8"/><rect x="1" y="6" width="1" height="1" fill="#b8b8b8"/><rect x="1" y="9" width="1" height="1" fill="#b8b8b8"/><rect x="1" y="12" width="1" height="1" fill="#b8b8b8"/><rect x="1" y="16" width="1" height="1" fill="#b8b8b8"/><rect x="4" y="2" width="1" height="1" fill="#b8b8b8"/><rect x="4" y="6" width="1" height="1" fill="#b8b8b8"/><rect x="4" y="9" width="1" height="1" fill="#b8b8b8"/><rect x="4" y="12" width="1" height="1" fill="#b8b8b8"/><rect x="4" y="16" width="1" height="1" fill="#b8b8b8"/></svg>
<svg class="r" style="left:973px;top:67px;" width="25" height="23" viewBox="0 0 25 23"><circle cx="10" cy="10" r="9.5" fill="#5b8ac6"/><rect x="8.7" y="8" width="2.6" height="7" fill="#fff"/><circle cx="10.3" cy="5" r="1.5" fill="#fff"/><path d="M13 9L13 22L16 19L19 23L21 22L18 18H22Z" fill="#fff" stroke="#333" stroke-width=".9"/></svg>
<svg class="r" style="left:1007px;top:67px;" width="23" height="23" viewBox="0 0 23 23"><rect x="1" y="0" width="1.5" height="22" fill="#555"/><rect x="0" y="21" width="22" height="1.5" fill="#555"/><path d="M2 4H21M2 10H21M2 16H21" stroke="#888" stroke-width=".8"/><path d="M13 1.5L16 4L13 6.5L10 4Z" fill="none" stroke="#e33" stroke-width="1.5"/><path d="M7 7.5L10 10L7 12.5L4 10ZM13 7.5L16 10L13 12.5L10 10Z" fill="none" stroke="#3a3" stroke-width="1.5"/><path d="M7 13.5L10 16L7 18.5L4 16ZM13 13.5L16 16L13 18.5L10 16ZM19 13.5L21 16L19 18.5" fill="none" stroke="#48c" stroke-width="1.5"/></svg>
<svg class="r" style="left:1041px;top:67px;" width="22" height="22" viewBox="0 0 22 22"><circle cx="11" cy="11" r="6.5" fill="none" stroke="#5b8ac6" stroke-width="4"/><path d="M11 1V21M1 11H21M4 4L18 18M18 4L4 18" stroke="#5b8ac6" stroke-width="2.6"/><circle cx="11" cy="11" r="3" fill="#fff"/></svg>
<div class="r" style="left:1069px;top:63px;width:32px;height:31px;background:#dcdcdc;border:1px solid #b9b9b9;border-radius:3px;box-sizing:border-box;"></div>
<svg class="r" style="left:1077px;top:68px;" width="17" height="20" viewBox="0 0 17 20"><path d="M1 1H15V5H14L13 3H5L11 10L4 17H13L14 15H15.5V19H1V17.5L8 10L1 2.5Z" fill="#a01aa8"/></svg>
<svg class="r" style="left:1107px;top:68px;" width="22" height="20" viewBox="0 0 22 20"><rect x="0.5" y="0.5" width="20" height="19" fill="#fff" stroke="#6a9ad6"/><rect x="1" y="1" width="19" height="4" fill="#d6e4f6"/><path d="M3 3H8M10 3H18" stroke="#6a9ad6" stroke-width="1.4"/><path d="M3 8H6M8 8H18M3 11H6M8 11H18M3 14H6M8 14H18M3 17H6M8 17H18" stroke="#6a9ad6" stroke-width="1.2"/></svg>
<svg class="r" style="left:1136px;top:76px;" width="8" height="5" viewBox="0 0 8 5"><path d="M0 0H8L4 4.5Z" fill="#555"/></svg>
<svg class="r" style="left:1151px;top:69px;" width="24" height="18" viewBox="0 0 24 18"><path d="M1 3H22M1 1V5M22 1V5" stroke="#2a4a6a" stroke-width="1.6"/><rect x="0.5" y="9" width="22" height="8" fill="#c4c4c4" stroke="#555"/><path d="M4 9V12M7 9V13M10 9V12M13 9V14M16 9V12M19 9V13" stroke="#555"/></svg>
<svg class="r" style="left:1181px;top:76px;" width="8" height="5" viewBox="0 0 8 5"><path d="M0 0H8L4 4.5Z" fill="#555"/></svg>
<svg class="r" style="left:1197px;top:67px;" width="23" height="23" viewBox="0 0 23 23"><path d="M3 1H20Q22 1 22 3V10Q22 12 20 12H11L7 17L8 12H3Q1 12 1 10V3Q1 1 3 1Z" fill="#fbe98a" stroke="#c9a20c" stroke-width="1"/><circle cx="6" cy="18" r="3.5" fill="#5aa05a" stroke="#3f7e3f" stroke-width=".8"/></svg>
<svg class="r" style="left:1228px;top:67px;" width="26" height="24" viewBox="0 0 26 24"><circle cx="10" cy="10" r="7.5" fill="#ececec" stroke="#c8c8c8" stroke-width="2.5" stroke-dasharray="3 1.5"/><circle cx="10" cy="10" r="4" fill="#dedede" stroke="#c8c8c8"/><path d="M14 11L14 23L17 20L20 24L22 23L19 19H23Z" fill="#f4f4f4" stroke="#c8c8c8" stroke-width=".9"/></svg>
<svg class="r" style="left:1260px;top:76px;" width="8" height="5" viewBox="0 0 8 5"><path d="M0 0H8L4 4.5Z" fill="#c9c9c9"/></svg>
<svg class="r" style="left:7px;top:107px;" width="5" height="20" viewBox="0 0 5 20"><rect x="1" y="2" width="1" height="1" fill="#b8b8b8"/><rect x="1" y="6" width="1" height="1" fill="#b8b8b8"/><rect x="1" y="9" width="1" height="1" fill="#b8b8b8"/><rect x="1" y="12" width="1" height="1" fill="#b8b8b8"/><rect x="1" y="16" width="1" height="1" fill="#b8b8b8"/><rect x="4" y="2" width="1" height="1" fill="#b8b8b8"/><rect x="4" y="6" width="1" height="1" fill="#b8b8b8"/><rect x="4" y="9" width="1" height="1" fill="#b8b8b8"/><rect x="4" y="12" width="1" height="1" fill="#b8b8b8"/><rect x="4" y="16" width="1" height="1" fill="#b8b8b8"/></svg>
<svg class="r" style="left:20px;top:105px;" width="24" height="24" viewBox="0 0 24 24"><path d="M1 9L13 5L17 17L5 21Z" fill="#e06a3a" stroke="#b84a20" stroke-width=".6"/><path d="M4 4L14 3L15 15L5 16Z" fill="#f3cf4a" stroke="#c9a20c" stroke-width=".6"/><path d="M9 2L21 4L19 15L7 13Z" fill="#5b8ac6" stroke="#3f6aa3" stroke-width=".6"/><rect x="14" y="14" width="10" height="10" rx="2" fill="#5aa05a"/><path d="M19 16V22M16 19H22" stroke="#fff" stroke-width="2"/></svg>
<svg class="r" style="left:53px;top:105px;" width="25" height="24" viewBox="0 0 25 24"><path d="M1 8L10 13V23L1 18Z" fill="#d4a80a" stroke="#333" stroke-width=".6"/><path d="M10 13L23 8V18L10 23Z" fill="#f9e46a" stroke="#333" stroke-width=".6"/><path d="M1 8L14 3L23 8L10 13Z" fill="#e8c020" stroke="#333" stroke-width=".6"/><circle cx="12" cy="7" r="6.5" fill="#5b88c4"/><path d="M8 5Q11 3 13 6T17 6" stroke="#2a4a78" stroke-width="1.5" fill="none"/><rect x="14" y="14" width="10" height="10" rx="2" fill="#c9a20c"/><path d="M19 15.5V22.5M16 17.2L22 20.8M16 20.8L22 17.2" stroke="#fff" stroke-width="1.3"/></svg>
<svg class="r" style="left:86px;top:104px;" width="24" height="25" viewBox="0 0 24 25"><path d="M3 3L10 21L17 3L22 3" stroke="#2a3a4a" stroke-width="1.3" fill="none"/><circle cx="3" cy="3" r="1.8" fill="#fff" stroke="#2a3a4a"/><circle cx="10" cy="21" r="1.8" fill="#fff" stroke="#2a3a4a"/><circle cx="17" cy="3" r="1.8" fill="#fff" stroke="#2a3a4a"/><circle cx="22" cy="3" r="1.8" fill="#fff" stroke="#2a3a4a"/><rect x="14" y="14" width="10" height="10" rx="2" fill="#c9a20c"/><path d="M19 15.5V22.5M16 17.2L22 20.8M16 20.8L22 17.2" stroke="#fff" stroke-width="1.3"/></svg>
<svg class="r" style="left:119px;top:104px;" width="24" height="25" viewBox="0 0 24 25"><path d="M1 24Q3 12 12 6Q18 2 23 1Q22 8 16 14Q10 20 4 20Z" fill="#8fb4d8" stroke="#4a6a8a" stroke-width=".8"/><path d="M2 23Q10 12 21 3" stroke="#4a6a8a" stroke-width=".8" fill="none"/><rect x="14" y="14" width="10" height="10" rx="2" fill="#c9a20c"/><path d="M19 15.5V22.5M16 17.2L22 20.8M16 20.8L22 17.2" stroke="#fff" stroke-width="1.3"/></svg>
<svg class="r" style="left:155px;top:106px;" width="22" height="23" viewBox="0 0 22 23"><path d="M4 1V5M7 1V5M10 1V5M13 1V5M16 1V5M4 16V20M7 16V20M10 16V20M13 16V20M16 16V20" stroke="#3a5f90" stroke-width="1.2"/><rect x="0.5" y="5" width="20" height="11" rx="1" fill="#5b8ac6" stroke="#3f6aa3"/><rect x="11" y="13" width="10" height="10" rx="2" fill="#c9a20c"/><path d="M16 14.5V21.5M13 16.2L19 19.8M13 19.8L19 16.2" stroke="#fff" stroke-width="1.3"/></svg>
<svg class="r" style="left:186px;top:105px;" width="24" height="24" viewBox="0 0 24 24"><rect x="0.5" y="0.5" width="21" height="21" fill="#5b8ac6" stroke="#2a4a78"/><path d="M11 1V21M1 11H21M1 1L11 11M11 1L1 11M21 1L11 11M1 16H11" stroke="#2a4a78" stroke-width="1"/><rect x="2" y="2" width="8" height="8" fill="#9cbce4"/><path d="M2 2L10 10M10 2L2 10" stroke="#2a4a78"/><rect x="14" y="14" width="10" height="10" rx="2" fill="#c9a20c"/><path d="M19 15.5V22.5M16 17.2L22 20.8M16 20.8L22 17.2" stroke="#fff" stroke-width="1.3"/></svg>
<svg class="r" style="left:218px;top:105px;" width="25" height="24" viewBox="0 0 25 24"><rect x="0.5" y="0.5" width="22" height="22" rx="2" fill="#a8c4e8" stroke="#4a6a9a"/><path d="M3 3L9 19L15 3L21 3" stroke="#2a3a4a" stroke-width="1.3" fill="none"/><circle cx="9" cy="19" r="1.8" fill="#fff" stroke="#2a3a4a"/><circle cx="15" cy="3" r="1.5" fill="#fff" stroke="#2a3a4a"/><rect x="14" y="14" width="10" height="10" rx="2" fill="#c9a20c"/><path d="M19 15.5V22.5M16 17.2L22 20.8M16 20.8L22 17.2" stroke="#fff" stroke-width="1.3"/></svg>
<svg class="r" style="left:255px;top:107px;" width="5" height="20" viewBox="0 0 5 20"><rect x="1" y="2" width="1" height="1" fill="#b8b8b8"/><rect x="1" y="6" width="1" height="1" fill="#b8b8b8"/><rect x="1" y="9" width="1" height="1" fill="#b8b8b8"/><rect x="1" y="12" width="1" height="1" fill="#b8b8b8"/><rect x="1" y="16" width="1" height="1" fill="#b8b8b8"/><rect x="4" y="2" width="1" height="1" fill="#b8b8b8"/><rect x="4" y="6" width="1" height="1" fill="#b8b8b8"/><rect x="4" y="9" width="1" height="1" fill="#b8b8b8"/><rect x="4" y="12" width="1" height="1" fill="#b8b8b8"/><rect x="4" y="16" width="1" height="1" fill="#b8b8b8"/></svg>
<svg class="r" style="left:269px;top:105px;" width="25" height="24" viewBox="0 0 25 24"><path d="M2 21L13 2L17 4L6 23Z" fill="#e6e3e0" stroke="#d6d2ce"/><path d="M7 21L18 2L22 4L11 23Z" fill="#e6e3e0" stroke="#d6d2ce"/></svg>
<svg class="r" style="left:289px;top:126px;" width="8" height="5" viewBox="0 0 8 5"><path d="M0 0H8L4 4.5Z" fill="#c9c9c9"/></svg>
<svg class="r" style="left:303px;top:104px;" width="18" height="25" viewBox="0 0 18 25"><path d="M1 23L3 17L13 1L17 3.5L7 19.5Z" fill="#f3e04a" stroke="#333" stroke-width=".8"/><path d="M1 23L3 17L7 19.5Z" fill="#aaa" stroke="#333" stroke-width=".6"/><path d="M13 1L17 3.5" stroke="#ddd" stroke-width="2"/></svg>
<svg class="r" style="left:334px;top:105px;" width="24" height="24" viewBox="0 0 24 24"><rect x="0.5" y="0.5" width="20" height="20" rx="3" fill="#dcdcdc" stroke="#cfcfcf"/><rect x="4" y="2" width="13" height="7" fill="#eee"/><rect x="4" y="12" width="10" height="7" fill="#eee"/><path d="M12 23L22 9L24 11L14 24Z" fill="#e2dfdc"/></svg>
<svg class="r" style="left:367px;top:106px;" width="22" height="21" viewBox="0 0 22 21"><path d="M3 18L19 3" stroke="#c8c8c8" stroke-dasharray="2 2"/><rect x="0.5" y="16" width="4" height="4" fill="none" stroke="#c8c8c8"/><rect x="17" y="0.5" width="4" height="4" fill="none" stroke="#c8c8c8"/></svg>
<svg class="r" style="left:397px;top:113px;" width="8" height="5" viewBox="0 0 8 5"><path d="M0 0H8L4 4.5Z" fill="#c9c9c9"/></svg>
<svg class="r" style="left:1025px;top:107px;" width="14" height="22" viewBox="0 0 14 22"><rect x="1" y="1" width="12" height="10" fill="#e2e2e2"/><text x="2" y="9" font-size="7" fill="#c9c9c9" font-family="Liberation Sans">oc</text><rect x="3" y="12" width="10" height="9" fill="#e6e6e6" stroke="#d0d0d0"/></svg>
<svg class="r" style="left:1050px;top:107px;" width="5" height="20" viewBox="0 0 5 20"><rect x="1" y="2" width="1" height="1" fill="#b8b8b8"/><rect x="1" y="6" width="1" height="1" fill="#b8b8b8"/><rect x="1" y="9" width="1" height="1" fill="#b8b8b8"/><rect x="1" y="12" width="1" height="1" fill="#b8b8b8"/><rect x="1" y="16" width="1" height="1" fill="#b8b8b8"/><rect x="4" y="2" width="1" height="1" fill="#b8b8b8"/><rect x="4" y="6" width="1" height="1" fill="#b8b8b8"/><rect x="4" y="9" width="1" height="1" fill="#b8b8b8"/><rect x="4" y="12" width="1" height="1" fill="#b8b8b8"/><rect x="4" y="16" width="1" height="1" fill="#b8b8b8"/></svg>
<svg class="r" style="left:1062px;top:105px;" width="26" height="24" viewBox="0 0 26 24"><circle cx="12.5" cy="11" r="10.5" fill="#5b88c4" stroke="#2a4a78"/><path d="M3 8H22M3 14H22M12.5 1V21" stroke="#cfe0f4" stroke-width=".8"/><ellipse cx="7" cy="19" rx="5" ry="4" fill="#111"/><ellipse cx="18" cy="19" rx="5" ry="4" fill="#111"/><ellipse cx="7" cy="20" rx="3" ry="2" fill="#fff"/><ellipse cx="18" cy="20" rx="3" ry="2" fill="#fff"/></svg>
<svg class="r" style="left:1099px;top:107px;" width="5" height="20" viewBox="0 0 5 20"><rect x="1" y="2" width="1" height="1" fill="#b8b8b8"/><rect x="1" y="6" width="1" height="1" fill="#b8b8b8"/><rect x="1" y="9" width="1" height="1" fill="#b8b8b8"/><rect x="1" y="12" width="1" height="1" fill="#b8b8b8"/><rect x="1" y="16" width="1" height="1" fill="#b8b8b8"/><rect x="4" y="2" width="1" height="1" fill="#b8b8b8"/><rect x="4" y="6" width="1" height="1" fill="#b8b8b8"/><rect x="4" y="9" width="1" height="1" fill="#b8b8b8"/><rect x="4" y="12" width="1" height="1" fill="#b8b8b8"/><rect x="4" y="16" width="1" height="1" fill="#b8b8b8"/></svg>
<svg class="r" style="left:1113px;top:107px;" width="23" height="21" viewBox="0 0 23 21"><path d="M10 1H6Q3 1 3 4V7H1V13Q1 16 4 16H6V12Q6 10 9 10H14Q16 10 16 8V4Q16 1 13 1Z" fill="#3f74a8"/><path d="M9 20H13Q16 20 16 17V14H18V8Q18 5 15 5H13V9Q13 11 10 11H5Q3 11 3 13V17Q3 20 6 20Z" fill="#f6d44a"/><path d="M15 15L20 17L15 19" stroke="#333" fill="none" stroke-width="1.2"/></svg>
<svg class="r" style="left:1148px;top:107px;" width="5" height="20" viewBox="0 0 5 20"><rect x="1" y="2" width="1" height="1" fill="#b8b8b8"/><rect x="1" y="6" width="1" height="1" fill="#b8b8b8"/><rect x="1" y="9" width="1" height="1" fill="#b8b8b8"/><rect x="1" y="12" width="1" height="1" fill="#b8b8b8"/><rect x="1" y="16" width="1" height="1" fill="#b8b8b8"/><rect x="4" y="2" width="1" height="1" fill="#b8b8b8"/><rect x="4" y="6" width="1" height="1" fill="#b8b8b8"/><rect x="4" y="9" width="1" height="1" fill="#b8b8b8"/><rect x="4" y="12" width="1" height="1" fill="#b8b8b8"/><rect x="4" y="16" width="1" height="1" fill="#b8b8b8"/></svg>
<svg class="r" style="left:1162px;top:106px;" width="22" height="22" viewBox="0 0 22 22"><rect x="0.5" y="0.5" width="20" height="20" fill="#5b8ac6" stroke="#2a3a4a"/><rect x="0" y="0" width="5" height="21" fill="#2a3a4a"/><text x="9" y="16" font-size="13" fill="#fff" font-family="Liberation Sans">?</text></svg>
<svg class="r" style="left:1197px;top:107px;" width="5" height="20" viewBox="0 0 5 20"><rect x="1" y="2" width="1" height="1" fill="#b8b8b8"/><rect x="1" y="6" width="1" height="1" fill="#b8b8b8"/><rect x="1" y="9" width="1" height="1" fill="#b8b8b8"/><rect x="1" y="12" width="1" height="1" fill="#b8b8b8"/><rect x="1" y="16" width="1" height="1" fill="#b8b8b8"/><rect x="4" y="2" width="1" height="1" fill="#b8b8b8"/><rect x="4" y="6" width="1" height="1" fill="#b8b8b8"/><rect x="4" y="9" width="1" height="1" fill="#b8b8b8"/><rect x="4" y="12" width="1" height="1" fill="#b8b8b8"/><rect x="4" y="16" width="1" height="1" fill="#b8b8b8"/></svg>
<svg class="r" style="left:7px;top:146px;" width="5" height="20" viewBox="0 0 5 20"><rect x="1" y="2" width="1" height="1" fill="#b8b8b8"/><rect x="1" y="6" width="1" height="1" fill="#b8b8b8"/><rect x="1" y="9" width="1" height="1" fill="#b8b8b8"/><rect x="1" y="12" width="1" height="1" fill="#b8b8b8"/><rect x="1" y="16" width="1" height="1" fill="#b8b8b8"/><rect x="4" y="2" width="1" height="1" fill="#b8b8b8"/><rect x="4" y="6" width="1" height="1" fill="#b8b8b8"/><rect x="4" y="9" width="1" height="1" fill="#b8b8b8"/><rect x="4" y="12" width="1" height="1" fill="#b8b8b8"/><rect x="4" y="16" width="1" height="1" fill="#b8b8b8"/></svg>
<svg class="r" style="left:20px;top:144px;" width="24" height="24" viewBox="0 0 24 24"><path d="M1 1L1 23H23Z" fill="#e4ded6" stroke="#c4beb6"/><path d="M5 13L5 19H11Z" fill="#f5f5f5" stroke="#c4beb6"/><rect x="17" y="1" width="5" height="21" fill="#ebe6de" stroke="#c4beb6"/></svg>
<svg class="r" style="left:54px;top:144px;" width="24" height="24" viewBox="0 0 24 24"><path d="M1 6C1 1 8 1 12 3C16 1 22 2 22 6C22 10 16 10 12 9C8 11 1 11 1 6Z" fill="#dcdcdc" stroke="#c8c8c8"/><rect x="11.5" y="12.5" width="11" height="11" rx="2" fill="#cbcbcb"/><path d="M13 18H20M17.5 15L20.5 18L17.5 21" stroke="#fff" stroke-width="2" fill="none"/></svg>
<svg class="r" style="left:83px;top:154px;" width="8" height="5" viewBox="0 0 8 5"><path d="M0 0H8L4 4.5Z" fill="#cdcdcd"/></svg>
<svg class="r" style="left:99px;top:144px;" width="24" height="24" viewBox="0 0 24 24"><path d="M1 6C1 1 8 1 12 3C16 1 22 2 22 6C22 10 16 10 12 9C8 11 1 11 1 6Z" fill="#dcdcdc" stroke="#c8c8c8"/><rect x="11.5" y="12.5" width="11" height="11" rx="2" fill="#cbcbcb"/><circle cx="17" cy="18" r="3" fill="none" stroke="#fff" stroke-width="1.6"/></svg>
<svg class="r" style="left:132px;top:144px;" width="24" height="24" viewBox="0 0 24 24"><path d="M1 6C1 1 8 1 12 3C16 1 22 2 22 6C22 10 16 10 12 9C8 11 1 11 1 6Z" fill="#dcdcdc" stroke="#c8c8c8"/><rect x="11.5" y="12.5" width="11" height="11" rx="2" fill="#cbcbcb"/><path d="M13 18H21M15 16L13 18L15 20M19 16L21 18L19 20" stroke="#fff" stroke-width="1.5" fill="none"/></svg>
<svg class="r" style="left:165px;top:144px;" width="24" height="24" viewBox="0 0 24 24"><circle cx="8" cy="8" r="7.5" fill="#dcdcdc" stroke="#c8c8c8"/><path d="M12 10L19 10L23 17L19 23H12L8 17Z" fill="#e6e6e6" stroke="#c8c8c8"/><path d="M9 9L15 15" stroke="#bbb"/></svg>
<svg class="r" style="left:198px;top:144px;" width="24" height="24" viewBox="0 0 24 24"><path d="M1 6C1 1 8 1 12 3C16 1 22 2 22 6C22 10 16 10 12 9C8 11 1 11 1 6Z" fill="#dcdcdc" stroke="#c8c8c8"/><ellipse cx="8" cy="5.5" rx="4" ry="2.5" fill="#e8e8e8" stroke="#c8c8c8"/><rect x="11.5" y="12.5" width="11" height="11" rx="2" fill="#cfcac2"/><circle cx="17" cy="18" r="2.5" fill="none" stroke="#fff" stroke-width="1.4"/></svg>
<svg class="r" style="left:231px;top:144px;" width="24" height="24" viewBox="0 0 24 24"><path d="M1 6C1 1 8 1 12 3C16 1 22 2 22 6C22 10 16 10 12 9C8 11 1 11 1 6Z" fill="#dcdcdc" stroke="#c8c8c8"/><path d="M3 20C1 16 5 12 8 13C10 14 8 20 5 21Z" fill="#dcdcdc" stroke="#c8c8c8"/><rect x="11.5" y="12.5" width="11" height="11" rx="2" fill="#cfcac2"/><circle cx="17" cy="18" r="2.5" fill="none" stroke="#fff" stroke-width="1.4"/></svg>
<svg class="r" style="left:264px;top:144px;" width="24" height="24" viewBox="0 0 24 24"><path d="M1 6C1 1 8 1 12 3C16 1 22 2 22 6C22 10 16 10 12 9C8 11 1 11 1 6Z" fill="#dcdcdc" stroke="#c8c8c8"/><ellipse cx="8" cy="5.5" rx="4" ry="2.5" fill="#cfcfcf" stroke="#c0c0c0"/><rect x="11.5" y="12.5" width="11" height="11" rx="2" fill="#cfcac2"/><circle cx="17" cy="18" r="2.5" fill="none" stroke="#fff" stroke-width="1.4"/></svg>
<svg class="r" style="left:297px;top:144px;" width="24" height="24" viewBox="0 0 24 24"><path d="M1 6C1 1 8 1 12 3C16 1 22 2 22 6C22 10 16 10 12 9C8 11 1 11 1 6Z" fill="#dcdcdc" stroke="#c8c8c8"/><ellipse cx="8" cy="5.5" rx="4" ry="2.5" fill="#fafafa" stroke="#c0c0c0"/><rect x="11.5" y="12.5" width="11" height="11" rx="2" fill="#e3d9d9"/><path d="M14.5 15.5L19.5 20.5M19.5 15.5L14.5 20.5" stroke="#fff" stroke-width="1.8"/></svg>
<svg class="r" style="left:330px;top:144px;" width="24" height="24" viewBox="0 0 24 24"><path d="M1 6C1 1 8 1 12 3C16 1 22 2 22 6C22 10 16 10 12 9C8 11 1 11 1 6Z" fill="#dcdcdc" stroke="#c8c8c8"/><path d="M3 20C1 16 5 12 8 13C10 14 8 20 5 21Z" fill="#dcdcdc" stroke="#c8c8c8"/><rect x="11.5" y="12.5" width="11" height="11" rx="2" fill="#e3d9d9"/><path d="M14.5 15.5L19.5 20.5M19.5 15.5L14.5 20.5" stroke="#fff" stroke-width="1.8"/></svg>
<svg class="r" style="left:363px;top:144px;" width="24" height="24" viewBox="0 0 24 24"><path d="M1 4C1 0 8 1 12 2C17 0 23 1 23 5C23 9 16 9 13 9C11 12 10 20 6 21C4 16 6 12 4 9C2 8 1 6 1 4Z" fill="#dcdcdc" stroke="#c8c8c8"/></svg>
<svg class="r" style="left:396px;top:144px;" width="17" height="24" viewBox="0 0 17 24"><path d="M2 20C0 16 6 8 12 3C14 1 17 2 17 4L17 10C13 14 10 22 4 22Z" fill="#dcdcdc" stroke="#c8c8c8"/><path d="M4 19C3 16 8 9 13 5" stroke="#bbb" fill="none"/></svg>
<div class="r" style="left:413px;top:59px;width:281px;height:155px;background:#fff;border:1px solid #a3a3a3;box-sizing:border-box;"></div>
<div class="r" style="left:414px;top:90px;width:279px;height:31px;background:#3089c8;"></div>
<div class="t" style="left:444.50px;top:63.82px;font-size:18.7px;line-height:22px;color:#000;font-weight:normal;transform:scaleX(0.9995);transform-origin:0 0;">Geoprocessing Tools</div>
<div class="r" style="left:444px;top:84px;width:15px;height:1px;background:#000;"></div>
<svg class="r" style="left:681px;top:71px;" width="7" height="10" viewBox="0 0 7 10"><path d="M1 1L5.5 5L1 9Z" fill="#555"/></svg>
<div class="t" style="left:444.50px;top:94.52px;font-size:18.7px;line-height:22px;color:#fff;font-weight:normal;transform:scaleX(1.0221);transform-origin:0 0;">Geometry Tools</div>
<div class="r" style="left:459px;top:114px;width:11px;height:1px;background:#fff;"></div>
<svg class="r" style="left:681px;top:101px;" width="7" height="10" viewBox="0 0 7 10"><path d="M1 1L5.5 5L1 9Z" fill="#c9def0"/></svg>
<div class="t" style="left:444.50px;top:125.52px;font-size:18.7px;line-height:22px;color:#000;font-weight:normal;transform:scaleX(0.9886);transform-origin:0 0;">Analysis Tools</div>
<div class="r" style="left:444px;top:145px;width:12px;height:1px;background:#000;"></div>
<svg class="r" style="left:681px;top:132px;" width="7" height="10" viewBox="0 0 7 10"><path d="M1 1L5.5 5L1 9Z" fill="#555"/></svg>
<div class="t" style="left:444.50px;top:156.42px;font-size:18.7px;line-height:22px;color:#000;font-weight:normal;transform:scaleX(0.9810);transform-origin:0 0;">Research Tools</div>
<div class="r" style="left:444px;top:176px;width:13px;height:1px;background:#000;"></div>
<svg class="r" style="left:681px;top:163px;" width="7" height="10" viewBox="0 0 7 10"><path d="M1 1L5.5 5L1 9Z" fill="#555"/></svg>
<div class="t" style="left:444.50px;top:187.22px;font-size:18.7px;line-height:22px;color:#000;font-weight:normal;transform:scaleX(1.0214);transform-origin:0 0;">Data Management Tools</div>
<div class="r" style="left:444px;top:207px;width:14px;height:1px;background:#000;"></div>
<svg class="r" style="left:681px;top:194px;" width="7" height="10" viewBox="0 0 7 10"><path d="M1 1L5.5 5L1 9Z" fill="#555"/></svg>
<div class="r" style="left:693px;top:90px;width:332px;height:372px;background:#fff;border:1px solid #a3a3a3;box-sizing:border-box;"></div>
<div class="r" style="left:694px;top:121px;width:330px;height:31px;background:#3089c8;"></div>
<div class="t" style="left:724.70px;top:94.12px;font-size:18.7px;line-height:22px;color:#000;font-weight:normal;transform:scaleX(1.0027);transform-origin:0 0;">Centroids…</div>
<svg class="r" style="left:701px;top:98px;" width="16" height="16" viewBox="0 0 16 16"><path d="M2 8C2 4 6 4 8 6C10 4 14 4 14 8C14 12 10 12 8 10C6 12 2 12 2 8Z" fill="#e6e6e6" stroke="#8a8a8a"/><circle cx="7.5" cy="7.5" r="2" fill="#5faa5a"/></svg>
<div class="t" style="left:724.70px;top:125.12px;font-size:18.7px;line-height:22px;color:#fff;font-weight:normal;transform:scaleX(1.0118);transform-origin:0 0;">Collect Geometries…</div>
<svg class="r" style="left:701px;top:129px;" width="16" height="16" viewBox="0 0 16 16"><path d="M3 4C5 2 12 2 13 5C14 8 10 7 8 8C6 9 2 8 3 4Z" fill="#86c07a" stroke="#3f6e3f" stroke-width=".6"/><ellipse cx="6" cy="12" rx="3" ry="3.3" fill="#86c07a" stroke="#3f6e3f" stroke-width=".6"/><path d="M11 10L14 14H10Z" fill="#eee"/></svg>
<div class="t" style="left:724.70px;top:156.12px;font-size:18.7px;line-height:22px;color:#000;font-weight:normal;transform:scaleX(1.0139);transform-origin:0 0;">Delaunay Triangulation…</div>
<svg class="r" style="left:701px;top:160px;" width="16" height="16" viewBox="0 0 16 16"><path d="M3 3L11 1L15 7L12 14L4 14L1 8Z" fill="#6b8aa6" stroke="#9ab" stroke-width=".8"/></svg>
<div class="t" style="left:724.70px;top:187.12px;font-size:18.7px;line-height:22px;color:#000;font-weight:normal;transform:scaleX(1.0031);transform-origin:0 0;">Densify by Count…</div>
<svg class="r" style="left:701px;top:191px;" width="16" height="16" viewBox="0 0 16 16"><circle cx="8" cy="8" r="5" fill="none" stroke="#7aa2d8" stroke-width="3"/><path d="M8 1V15M1 8H15M3 3L13 13M13 3L3 13" stroke="#7aa2d8" stroke-width="1.6"/><circle cx="8" cy="8" r="2" fill="#fff"/></svg>
<div class="t" style="left:724.70px;top:218.12px;font-size:18.7px;line-height:22px;color:#000;font-weight:normal;transform:scaleX(1.0134);transform-origin:0 0;">Extract Vertices…</div>
<svg class="r" style="left:701px;top:222px;" width="16" height="16" viewBox="0 0 16 16"><circle cx="2" cy="6" r="1.6" fill="#6a9a64"/><circle cx="11" cy="5" r="1.6" fill="#6a9a64"/><circle cx="15" cy="5" r="1.6" fill="#6a9a64"/><circle cx="6" cy="11" r="1.8" fill="#6a9a64"/></svg>
<div class="t" style="left:724.70px;top:249.12px;font-size:18.7px;line-height:22px;color:#000;font-weight:normal;transform:scaleX(1.0445);transform-origin:0 0;">Multipart to Singleparts…</div>
<svg class="r" style="left:701px;top:253px;" width="16" height="16" viewBox="0 0 16 16"><path d="M2 4C2 2 10 1 14 3C16 5 12 7 9 7C6 7 2 7 2 4Z" fill="#eee" stroke="#999"/><ellipse cx="6" cy="11.5" rx="4" ry="3.5" fill="#7ab26f" stroke="#4e7e4e" stroke-width=".6"/></svg>
<div class="t" style="left:724.70px;top:280.12px;font-size:18.7px;line-height:22px;color:#000;font-weight:normal;transform:scaleX(0.9945);transform-origin:0 0;">Polygons to Lines…</div>
<svg class="r" style="left:701px;top:284px;" width="16" height="16" viewBox="0 0 16 16"><defs><linearGradient id="gpl" x1="0" x2="1"><stop offset=".35" stop-color="#fff"/><stop offset=".6" stop-color="#8cc48a"/></linearGradient><linearGradient id="glp" x1="0" x2="1"><stop offset=".4" stop-color="#fff"/><stop offset=".7" stop-color="#6fb46a"/></linearGradient></defs><path d="M2 12C1 10 4 8 7 6C9 4 12 2 14 4C15 6 12 8 10 10C8 12 4 15 2 12Z" fill="url(#gpl)" stroke="#777" stroke-width=".7"/></svg>
<div class="t" style="left:724.70px;top:311.12px;font-size:18.7px;line-height:22px;color:#000;font-weight:normal;transform:scaleX(1.0052);transform-origin:0 0;">Simplify…</div>
<svg class="r" style="left:701px;top:315px;" width="16" height="16" viewBox="0 0 16 16"><path d="M1 3L3 5L5 2L7 5L9 2L11 5L13 2L15 4" stroke="#555" fill="none" stroke-width=".8"/><path d="M1 9C4 7 6 11 9 9C12 7 13 10 15 9M1 13C4 11 6 15 9 13C12 11 13 14 15 13" stroke="#999" fill="none" stroke-width=".9"/></svg>
<div class="t" style="left:724.70px;top:342.12px;font-size:18.7px;line-height:22px;color:#000;font-weight:normal;transform:scaleX(1.0070);transform-origin:0 0;">Voronoi Polygons…</div>
<svg class="r" style="left:701px;top:346px;" width="16" height="16" viewBox="0 0 16 16"><rect x="0" y="1" width="15" height="15" fill="#58799b"/><path d="M0 8L8 16M6 1L9 9L15 7" stroke="#8fa6bd" stroke-width="1" fill="none"/><circle cx="4" cy="5" r=".9" fill="#eee"/><circle cx="11" cy="5" r=".9" fill="#eee"/><circle cx="5" cy="12" r=".9" fill="#eee"/></svg>
<div class="t" style="left:724.70px;top:373.12px;font-size:18.7px;line-height:22px;color:#000;font-weight:normal;transform:scaleX(0.9985);transform-origin:0 0;">Check Validity…</div>
<svg class="r" style="left:701px;top:377px;" width="16" height="16" viewBox="0 0 16 16"><path d="M1.5 8.5L5.5 12.5L14 4" stroke="#5d7a96" stroke-width="2.6" fill="none"/></svg>
<div class="t" style="left:724.70px;top:404.12px;font-size:18.7px;line-height:22px;color:#000;font-weight:normal;transform:scaleX(1.0435);transform-origin:0 0;">Add Geometry Attributes…</div>
<svg class="r" style="left:701px;top:408px;" width="16" height="16" viewBox="0 0 16 16"><path d="M1 4V2H15V4" stroke="#aaa" fill="none"/><rect x="0.5" y="7" width="15" height="6.5" rx="1" fill="#6b8aa6"/><path d="M3 9V13M5 11V13M7 11V13M9 11V13M11 11V13M13 9V13" stroke="#dfe8f0" stroke-width=".7"/></svg>
<div class="t" style="left:724.70px;top:435.12px;font-size:18.7px;line-height:22px;color:#000;font-weight:normal;transform:scaleX(0.9945);transform-origin:0 0;">Lines to Polygons…</div>
<svg class="r" style="left:701px;top:439px;" width="16" height="16" viewBox="0 0 16 16"><defs><linearGradient id="gpl" x1="0" x2="1"><stop offset=".35" stop-color="#fff"/><stop offset=".6" stop-color="#8cc48a"/></linearGradient><linearGradient id="glp" x1="0" x2="1"><stop offset=".4" stop-color="#fff"/><stop offset=".7" stop-color="#6fb46a"/></linearGradient></defs><path d="M2 12C1 10 4 8 7 6C9 4 12 2 14 4C15 6 12 8 10 10C8 12 4 15 2 12Z" fill="url(#glp)" stroke="#777" stroke-width=".7"/></svg>
</body></html>
